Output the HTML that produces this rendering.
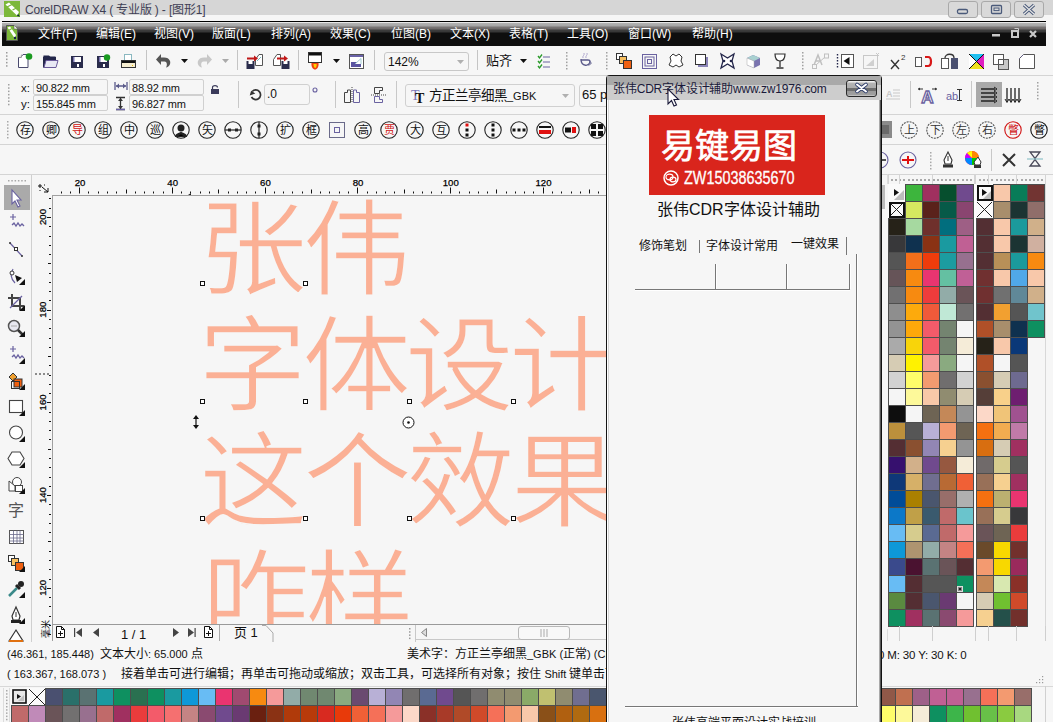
<!DOCTYPE html><html lang="zh-CN"><head><meta charset="utf-8"><style>
*{margin:0;padding:0;box-sizing:border-box}
html,body{width:1053px;height:722px;overflow:hidden;background:#f6f6f6;font-family:"Liberation Sans",sans-serif;position:relative}
.ab{position:absolute}
.t{position:absolute;white-space:nowrap;line-height:1}
svg{overflow:visible}
</style></head><body>
<div class="ab" style="left:0px;top:0px;width:1053px;height:15px;background:#d6d6d6"></div>
<div class="ab" style="left:0px;top:15px;width:1053px;height:6px;background:#f6f6f6"></div>
<svg class="ab" style="left:4px;top:1px" width="16" height="16" viewBox="0 0 16 16"><rect width="16" height="16" fill="#7cb83a"/><path d="M1.5 3.5 L5 1.5 L15 11 L13 14.5 Z" fill="#fff"/><path d="M3 6 L8 3.5 M8.5 9 L12.5 7" stroke="#7cb83a" stroke-width="1.3"/><path d="M14 13 L16 15.5 L13 15Z" fill="#124"/></svg>
<div class="t" style="left:25px;top:4px;font-size:12px;color:#3f3f55;letter-spacing:-0.16px">CorelDRAW X4 ( 专业版 ) - [图形1]</div>
<div class="ab" style="left:948px;top:1px;width:30px;height:17px;background:#d9d9d9;border:1px solid #a9a9a9;border-radius:3px"></div>
<div class="ab" style="left:981px;top:1px;width:30px;height:17px;background:#d9d9d9;border:1px solid #a9a9a9;border-radius:3px"></div>
<div class="ab" style="left:1014px;top:1px;width:30px;height:17px;background:#d9d9d9;border:1px solid #a9a9a9;border-radius:3px"></div>
<svg class="ab" style="left:948px;top:1px" width="30" height="17" viewBox="0 0 30 17"><rect x="9.5" y="8.5" width="10" height="4" rx="1.5" fill="none" stroke="#4a5a7a" stroke-width="1.3"/></svg>
<svg class="ab" style="left:981px;top:1px" width="30" height="17" viewBox="0 0 30 17"><rect x="10.5" y="4.5" width="10" height="8" rx="1" fill="none" stroke="#4a5a7a" stroke-width="1.3"/><rect x="13" y="7" width="5" height="2.6" fill="none" stroke="#4a5a7a" stroke-width="1"/></svg>
<svg class="ab" style="left:1014px;top:1px" width="30" height="17" viewBox="0 0 30 17"><path d="M10 4 L20 13 M20 4 L10 13" stroke="#4a5a7a" stroke-width="3.2"/><path d="M10 4 L20 13 M20 4 L10 13" stroke="#e6e6e6" stroke-width="1.2"/></svg>
<div class="ab" style="left:2px;top:21px;width:1044px;height:25px;background:linear-gradient(#000 0,#000 1px,#e8e8e8 1px,#e8e8e8 2px,#b4b4b4 2px,#a4a4a4 5px,#7a7676 6px,#6c6868 8px,#3e3e3e 9px,#363636 11px,#0e0e0e 12px,#0e0e0e 25px)"></div>
<svg class="ab" style="left:6px;top:25px" width="12" height="16" viewBox="0 0 12 16"><path d="M0.5 0.5 H8 L11.5 4 V15.5 H0.5 Z" fill="#7cb83a" stroke="#555"/><path d="M8 0.5 V4 H11.5" fill="#fff" stroke="#555" stroke-width=".6"/><path d="M1.5 2.5 L4 1.5 L10 10 L8.5 13 Z" fill="#fff"/><path d="M2.5 5.5 L6 3.5" stroke="#7cb83a" stroke-width="1.1"/><circle cx="9" cy="13" r="1.2" fill="#124"/></svg>
<div class="t" style="left:38px;top:28px;font-size:12px;color:#fff;">文件(F)</div>
<div class="t" style="left:96px;top:28px;font-size:12px;color:#fff;">编辑(E)</div>
<div class="t" style="left:154px;top:28px;font-size:12px;color:#fff;">视图(V)</div>
<div class="t" style="left:212px;top:28px;font-size:12px;color:#fff;">版面(L)</div>
<div class="t" style="left:271px;top:28px;font-size:12px;color:#fff;">排列(A)</div>
<div class="t" style="left:330px;top:28px;font-size:12px;color:#fff;">效果(C)</div>
<div class="t" style="left:391px;top:28px;font-size:12px;color:#fff;">位图(B)</div>
<div class="t" style="left:450px;top:28px;font-size:12px;color:#fff;">文本(X)</div>
<div class="t" style="left:509px;top:28px;font-size:12px;color:#fff;">表格(T)</div>
<div class="t" style="left:567px;top:28px;font-size:12px;color:#fff;">工具(O)</div>
<div class="t" style="left:628px;top:28px;font-size:12px;color:#fff;">窗口(W)</div>
<div class="t" style="left:692px;top:28px;font-size:12px;color:#fff;">帮助(H)</div>
<svg class="ab" style="left:990px;top:27px" width="50" height="14" viewBox="0 0 50 14"><rect x="2" y="7" width="8" height="2.5" fill="#c8c8c8"/><rect x="22" y="4" width="6" height="6" fill="none" stroke="#c8c8c8" stroke-width="2"/><path d="M24.5 1.5 H28.5 V6" fill="none" stroke="#c8c8c8" stroke-width="1"/><path d="M40 4 L46 10 M46 4 L40 10" stroke="#c8c8c8" stroke-width="2.2"/></svg>
<div class="ab" style="left:0px;top:75px;width:1053px;height:1px;background:#d4d4d4"></div>
<svg class="ab" style="left:6px;top:52px" width="2" height="18" viewBox="0 0 2 18"><rect x="0" y="0.0" width="1.5" height="1.5" fill="#9a9a9a"/><rect x="0" y="3.3" width="1.5" height="1.5" fill="#9a9a9a"/><rect x="0" y="6.6" width="1.5" height="1.5" fill="#9a9a9a"/><rect x="0" y="9.9" width="1.5" height="1.5" fill="#9a9a9a"/><rect x="0" y="13.2" width="1.5" height="1.5" fill="#9a9a9a"/></svg>
<svg class="ab" style="left:17px;top:53px" width="16" height="16" viewBox="0 0 16 16"><path d="M3.5 4.5 L6 1.5 H11 V14.5 H1.5 V4.5 Z" fill="#fff" stroke="#4a4a6e"/><path d="M1.5 4.5 H4.5 V1.5" fill="#ddd" stroke="#888" stroke-width=".6"/><circle cx="12" cy="3.5" r="3.3" fill="#1a9a20"/></svg>
<svg class="ab" style="left:43px;top:54px" width="16" height="14" viewBox="0 0 16 14"><path d="M0.5 1.5 H6 L7.5 3 H12.5 V6 H0.5 Z" fill="#23264a"/><path d="M0.5 13.5 V3 H12.5 V6" fill="#23264a" stroke="#23264a"/><path d="M1 13.5 L3 6.5 H15 L13 13.5 Z" fill="#e8e8f4" stroke="#6a5a9a"/></svg>
<svg class="ab" style="left:71px;top:56px" width="12" height="12" viewBox="0 0 12 12"><rect x="0" y="0" width="12" height="12" fill="#2a2c4c"/><rect x="2" y="1" width="8" height="5" fill="#fff"/><rect x="2" y="1" width="1.5" height="5" fill="#7a74b0"/><rect x="6" y="8" width="2" height="3" fill="#fff"/></svg>
<svg class="ab" style="left:97px;top:56px" width="12" height="12" viewBox="0 0 12 12"><rect x="0" y="0" width="12" height="12" fill="#2a2c4c"/><rect x="2" y="1" width="8" height="5" fill="#fff"/><rect x="2" y="1" width="1.5" height="5" fill="#7a74b0"/><rect x="6" y="8" width="2" height="3" fill="#fff"/><circle cx="10" cy="1.5" r="3.2" fill="#1a9a20"/></svg>
<svg class="ab" style="left:121px;top:54px" width="15" height="14" viewBox="0 0 15 14"><rect x="3.5" y="0.5" width="7" height="6" fill="#fff" stroke="#8ab8c0"/><rect x="0.5" y="6.5" width="14" height="7" fill="#f6eed0" stroke="#333"/><rect x="1" y="7" width="13" height="2" fill="#111"/><rect x="11" y="11" width="1" height="1" fill="#e6b800"/></svg>
<div class="ab" style="left:146px;top:50px;width:1px;height:20px;background:#c4c4c4"></div>
<svg class="ab" style="left:155px;top:53px" width="17" height="17" viewBox="0 0 17 17"><path d="M6 1 L1 6.5 L6 12 V8.5 H9.5 C12 8.5 12.5 12 11 14.5 C14 14 16 11 15 8 C14 5.5 12 4.5 9 4.5 H6 Z" fill="#555"/></svg>
<svg class="ab" style="left:181px;top:59px" width="8" height="5" viewBox="0 0 8 5"><path d="M0 0 H7 L3.5 4 Z" fill="#111"/></svg>
<svg class="ab" style="left:196px;top:53px" width="17" height="17" viewBox="0 0 17 17"><path d="M11 1 L16 6.5 L11 12 V8.5 H7.5 C5 8.5 4.5 12 6 14.5 C3 14 1 11 2 8 C3 5.5 5 4.5 8 4.5 H11 Z" fill="#c8c8c8"/></svg>
<svg class="ab" style="left:222px;top:59px" width="8" height="5" viewBox="0 0 8 5"><path d="M0 0 H7 L3.5 4 Z" fill="#aaa"/></svg>
<div class="ab" style="left:237px;top:50px;width:1px;height:20px;background:#c4c4c4"></div>
<svg class="ab" style="left:246px;top:53px" width="18" height="16" viewBox="0 0 18 16"><path d="M9.5 6.5 L13 1.5 H16.5 V12.5 H9.5 Z" fill="#fff" stroke="#555"/><path d="M11 8 L15 4" stroke="#7ab8c0"/><rect x="0.5" y="8" width="8" height="8" fill="#2a2c4c"/><rect x="2.5" y="8" width="4" height="3" fill="#fff"/><path d="M1 5.5 H9" stroke="#c01818" stroke-width="2"/><path d="M8 2.5 L12 5.5 L8 8.5 Z" fill="#c01818"/></svg>
<svg class="ab" style="left:273px;top:53px" width="17" height="16" viewBox="0 0 17 16"><path d="M0.5 6.5 L4 1.5 H7.5 V12.5 H0.5 Z" fill="#fff" stroke="#555"/><rect x="8.5" y="8" width="8" height="8" fill="#2a2c4c"/><rect x="10.5" y="8" width="4" height="3" fill="#fff"/><path d="M4 5.5 H12" stroke="#c01818" stroke-width="2"/><path d="M11 2.5 L15 5.5 L11 8.5 Z" fill="#c01818"/></svg>
<div class="ab" style="left:298px;top:50px;width:1px;height:20px;background:#c4c4c4"></div>
<svg class="ab" style="left:308px;top:52px" width="14" height="18" viewBox="0 0 14 18"><rect x="0.5" y="0.5" width="13" height="10" fill="#fff" stroke="#333"/><rect x="1" y="1" width="12" height="2.5" fill="#111"/><path d="M3.5 11 C3 15 5 17.5 7 17.5 C9 17.5 11 15 10.5 11 Z" fill="#f04010"/><path d="M5.5 12 C5.5 15 6.5 16 7.5 16 C8.5 15 9 13 8.5 12Z" fill="#ffd000"/></svg>
<svg class="ab" style="left:333px;top:59px" width="8" height="5" viewBox="0 0 8 5"><path d="M0 0 H7 L3.5 4 Z" fill="#111"/></svg>
<svg class="ab" style="left:349px;top:54px" width="15" height="15" viewBox="0 0 15 15"><rect x="0.5" y="0.5" width="14" height="14" fill="#fff" stroke="#555"/><rect x="1" y="1" width="13" height="2" fill="#6a62a8"/><rect x="2" y="8" width="10" height="5" fill="#5a54a0"/><path d="M6 10 L12 4.5 V10" fill="#fff" stroke="#8ac0c8" stroke-width=".8"/></svg>
<div class="ab" style="left:374px;top:50px;width:1px;height:20px;background:#c4c4c4"></div>
<div class="ab" style="left:384px;top:52px;width:85px;height:19px;background:#f6f6f6;border:1px solid #c8c8c8;border-radius:3px"></div>
<div class="t" style="left:388px;top:56px;font-size:12px;color:#111;">142%</div>
<svg class="ab" style="left:457px;top:60px" width="8" height="5" viewBox="0 0 8 5"><path d="M0 0 H7 L3.5 4 Z" fill="#b0b0b0"/></svg>
<div class="ab" style="left:477px;top:50px;width:1px;height:20px;background:#c4c4c4"></div>
<div class="t" style="left:486px;top:54px;font-size:13px;color:#111;">贴齐</div>
<svg class="ab" style="left:520px;top:59px" width="8" height="5" viewBox="0 0 8 5"><path d="M0 0 H7 L3.5 4 Z" fill="#111"/></svg>
<svg class="ab" style="left:537px;top:53px" width="14" height="16" viewBox="0 0 14 16"><path d="M1 3 L2.5 5 L5 1.5 M1 8 L2.5 10 L5 6.5 M1 13 L2.5 15 L5 11.5" fill="none" stroke="#2a9a2a" stroke-width="1.3"/><path d="M6 4 H13 M6 9 H13 M6 14 H13" stroke="#6a62a0" stroke-width="1.2"/></svg>
<svg class="ab" style="left:566px;top:52px" width="2" height="21" viewBox="0 0 2 21"><rect x="0" y="0.0" width="1.5" height="1.5" fill="#a0a0a0"/><rect x="0" y="3.2" width="1.5" height="1.5" fill="#a0a0a0"/><rect x="0" y="6.4" width="1.5" height="1.5" fill="#a0a0a0"/><rect x="0" y="9.6" width="1.5" height="1.5" fill="#a0a0a0"/><rect x="0" y="12.8" width="1.5" height="1.5" fill="#a0a0a0"/><rect x="0" y="16.0" width="1.5" height="1.5" fill="#a0a0a0"/></svg>
<svg class="ab" style="left:578px;top:53px" width="15" height="16" viewBox="0 0 15 16"><path d="M3 6 C3 14 12 14 12 8 C12 7 11 7 10 7 H3 Z" fill="none" stroke="#5a5a8a" stroke-width="1.3"/><path d="M11 9 C14 8 14 12 10 12" fill="none" stroke="#5a5a8a"/><path d="M5 5 C4 3 7 2 6 0 M8 5 C7 3 10 2 9 0" fill="none" stroke="#b0a8d0"/></svg>
<svg class="ab" style="left:606px;top:52px" width="2" height="21" viewBox="0 0 2 21"><rect x="0" y="0.0" width="1.5" height="1.5" fill="#a0a0a0"/><rect x="0" y="3.2" width="1.5" height="1.5" fill="#a0a0a0"/><rect x="0" y="6.4" width="1.5" height="1.5" fill="#a0a0a0"/><rect x="0" y="9.6" width="1.5" height="1.5" fill="#a0a0a0"/><rect x="0" y="12.8" width="1.5" height="1.5" fill="#a0a0a0"/><rect x="0" y="16.0" width="1.5" height="1.5" fill="#a0a0a0"/></svg>
<svg class="ab" style="left:616px;top:53px" width="17" height="17" viewBox="0 0 17 17"><rect x="0.5" y="0.5" width="6" height="6" fill="#fff" stroke="#333"/><rect x="3.5" y="3.5" width="7" height="7" fill="#f8c060" stroke="#333"/><rect x="7.5" y="7.5" width="8" height="8" fill="#f06010" stroke="#333"/></svg>
<svg class="ab" style="left:642px;top:54px" width="15" height="15" viewBox="0 0 15 15"><rect x="0.5" y="0.5" width="14" height="14" fill="none" stroke="#6a62a0"/><rect x="3" y="3" width="9" height="9" fill="none" stroke="#6a62a0"/><rect x="5.5" y="5.5" width="4" height="4" fill="none" stroke="#6a62a0"/></svg>
<svg class="ab" style="left:668px;top:53px" width="16" height="16" viewBox="0 0 16 16"><path d="M2 4 L5 1 L8 3 L11 1 L14 4 L13 8 L15 12 L11 14 L8 12 L5 14 L1 12 L3 8 Z" fill="#fff" stroke="#333"/></svg>
<svg class="ab" style="left:695px;top:54px" width="13" height="14" viewBox="0 0 13 14"><path d="M3 3 H13 V13 H3 Z" fill="#8a84b8"/><rect x="0.5" y="0.5" width="10" height="10" fill="#fff" stroke="#333"/></svg>
<svg class="ab" style="left:720px;top:53px" width="15" height="16" viewBox="0 0 15 16"><path d="M1 1 L7.5 5 L14 1 L12 8 L14 15 L7.5 11 L1 15 L3 8 Z" fill="#fff" stroke="#23264a" stroke-width="1.3"/><circle cx="4" cy="8" r="1.3" fill="#23264a"/><circle cx="11" cy="8" r="1.3" fill="#23264a"/></svg>
<svg class="ab" style="left:746px;top:54px" width="15" height="15" viewBox="0 0 15 15"><path d="M1 4 L7 1 L14 4 V11 L8 14 L1 11 Z" fill="#7a74b0"/><path d="M1 4 L7 1 L14 4 L8 7 Z" fill="#a8d0d0"/><path d="M1 4 L8 7 V14 L1 11 Z" fill="#fff" stroke="#aaa" stroke-width=".5"/></svg>
<svg class="ab" style="left:774px;top:53px" width="12" height="16" viewBox="0 0 12 16"><path d="M1 1 H11 C11 7 8 8 6 8 C4 8 1 7 1 1 Z" fill="#fff" stroke="#333" stroke-width="1.2"/><path d="M6 8 V14 M2.5 15 H9.5" stroke="#333" stroke-width="1.3"/></svg>
<svg class="ab" style="left:802px;top:52px" width="2" height="21" viewBox="0 0 2 21"><rect x="0" y="0.0" width="1.5" height="1.5" fill="#a0a0a0"/><rect x="0" y="3.2" width="1.5" height="1.5" fill="#a0a0a0"/><rect x="0" y="6.4" width="1.5" height="1.5" fill="#a0a0a0"/><rect x="0" y="9.6" width="1.5" height="1.5" fill="#a0a0a0"/><rect x="0" y="12.8" width="1.5" height="1.5" fill="#a0a0a0"/><rect x="0" y="16.0" width="1.5" height="1.5" fill="#a0a0a0"/></svg>
<svg class="ab" style="left:812px;top:53px" width="17" height="16" viewBox="0 0 17 16"><path d="M2 12 L6 2 L10 12 M3.5 8 H8.5" fill="none" stroke="#c0c0c0" stroke-width="1.5"/><rect x="12.5" y="1" width="4" height="4" fill="none" stroke="#c0c0c0"/><rect x="0.5" y="11.5" width="4" height="4" fill="none" stroke="#c0c0c0"/><path d="M4 12 L13 4" stroke="#c0c0c0"/></svg>
<svg class="ab" style="left:837px;top:54px" width="18" height="15" viewBox="0 0 18 15"><path d="M0.5 0 V15" stroke="#23264a" stroke-dasharray="1.5 1.5" stroke-width="1.4"/><rect x="4.5" y="0.5" width="12" height="13" fill="#fff" stroke="#555"/><path d="M6.5 7 L12.5 3 V11 Z" fill="#111"/></svg>
<svg class="ab" style="left:863px;top:53px" width="17" height="16" viewBox="0 0 17 16"><rect x="0.5" y="2.5" width="14" height="13" fill="none" stroke="#c8c8c8"/><path d="M3 13 L11 6 V13 Z" fill="#d0d0d0"/><path d="M13 0 L16 3 M16 0 L13 3" stroke="#c8c8c8"/></svg>
<svg class="ab" style="left:890px;top:54px" width="16" height="16" viewBox="0 0 16 16"><path d="M1 6 L9 15 M9 6 L1 15" stroke="#333" stroke-width="1.4"/><text x="11" y="6" font-size="8" font-family="Liberation Sans" fill="#333">2</text></svg>
<svg class="ab" style="left:915px;top:56px" width="17" height="11" viewBox="0 0 17 11"><rect x="0.5" y="1.5" width="6" height="9" fill="#fff" stroke="#555"/><path d="M10 1 H13 C17 1 17 10 13 10 H10" fill="none" stroke="#d81818" stroke-width="2.2"/></svg>
<svg class="ab" style="left:941px;top:53px" width="18" height="16" viewBox="0 0 18 16"><rect x="0.5" y="5.5" width="7" height="10" fill="#fff" stroke="#555"/><rect x="10" y="5" width="7" height="11" fill="#4a5070"/><path d="M4 5 C4 0 13 0 13 5" fill="none" stroke="#333" stroke-width="1.3"/></svg>
<svg class="ab" style="left:969px;top:54px" width="15" height="15" viewBox="0 0 15 15"><rect x="0" y="0" width="15" height="15" fill="#111"/><path d="M0 0 H15 L7.5 7.5 Z" fill="#20c0f0"/><path d="M15 0 V15 L7.5 7.5 Z" fill="#e020c0"/><path d="M0 15 H15 L7.5 7.5 Z" fill="#f0e020"/><path d="M0 0 V15 L7.5 7.5Z" fill="#fff"/><path d="M0 0 L15 15 M15 0 L0 15" stroke="#111"/></svg>
<svg class="ab" style="left:993px;top:54px" width="17" height="16" viewBox="0 0 17 16"><rect x="0.5" y="0.5" width="10" height="10" fill="#fff" stroke="#555"/><rect x="5.5" y="5.5" width="10" height="10" fill="#c8c8c8" stroke="#555"/><rect x="5.5" y="5.5" width="5" height="5" fill="#fff" stroke="#555"/></svg>
<svg class="ab" style="left:1019px;top:54px" width="17" height="15" viewBox="0 0 17 15"><path d="M0.5 4.5 L4.5 0.5 H15.5 V14.5 H0.5 Z" fill="#fff" stroke="#555"/><path d="M0.5 4.5 L4.5 0.5" stroke="#6a62a0" stroke-dasharray="1 1"/></svg>
<div class="ab" style="left:0px;top:114px;width:1053px;height:1px;background:#d4d4d4"></div>
<svg class="ab" style="left:8px;top:84px" width="2" height="25" viewBox="0 0 2 25"><rect x="0" y="0.0" width="1.5" height="1.5" fill="#a0a0a0"/><rect x="0" y="3.3" width="1.5" height="1.5" fill="#a0a0a0"/><rect x="0" y="6.6" width="1.5" height="1.5" fill="#a0a0a0"/><rect x="0" y="9.9" width="1.5" height="1.5" fill="#a0a0a0"/><rect x="0" y="13.2" width="1.5" height="1.5" fill="#a0a0a0"/><rect x="0" y="16.5" width="1.5" height="1.5" fill="#a0a0a0"/><rect x="0" y="19.8" width="1.5" height="1.5" fill="#a0a0a0"/></svg>
<div class="t" style="left:21px;top:83px;font-size:11.5px;color:#111;">x:</div>
<div class="t" style="left:21px;top:99px;font-size:11.5px;color:#111;">y:</div>
<div class="ab" style="left:33px;top:79px;width:75px;height:16px;background:#f6f6f6;border:1px solid #d0d0d0;border-radius:2px"></div>
<div class="ab" style="left:33px;top:95px;width:75px;height:16px;background:#f6f6f6;border:1px solid #d0d0d0;border-radius:2px"></div>
<div class="t" style="left:36px;top:83px;font-size:11px;color:#111;letter-spacing:-0.15px">90.822 mm</div>
<div class="t" style="left:36px;top:99px;font-size:11px;color:#111;letter-spacing:-0.15px">155.845 mm</div>
<svg class="ab" style="left:114px;top:82px" width="14" height="8" viewBox="0 0 14 8"><path d="M1 0 V8 M13 0 V8 M2 4 H12" stroke="#5a5a8a" stroke-width="1.3"/><path d="M2 4 L5 1.5 V6.5Z M12 4 L9 1.5 V6.5Z" fill="#5a5a8a"/></svg>
<svg class="ab" style="left:116px;top:97px" width="9" height="13" viewBox="0 0 9 13"><path d="M0 0.5 H9 M0 12.5 H9 M4.5 1 V12" stroke="#333" stroke-width="1.3"/><path d="M4.5 1 L2 4 H7Z M4.5 12 L2 9 H7Z" fill="#333"/><path d="M0 12.5 H9" stroke="#6a62a8" stroke-width="1.3"/></svg>
<div class="ab" style="left:129px;top:79px;width:75px;height:16px;background:#f6f6f6;border:1px solid #d0d0d0;border-radius:2px"></div>
<div class="ab" style="left:129px;top:95px;width:75px;height:16px;background:#f6f6f6;border:1px solid #d0d0d0;border-radius:2px"></div>
<div class="t" style="left:132px;top:83px;font-size:11px;color:#111;letter-spacing:-0.15px">88.92 mm</div>
<div class="t" style="left:132px;top:99px;font-size:11px;color:#111;letter-spacing:-0.15px">96.827 mm</div>
<svg class="ab" style="left:211px;top:85px" width="8" height="9" viewBox="0 0 8 9"><path d="M1.5 4 V2.5 C1.5 0 6.5 0 6.5 2.5" fill="none" stroke="#3a3a5a" stroke-width="1.2"/><rect x="0" y="4" width="8" height="5" fill="#3a3a5a"/></svg>
<div class="ab" style="left:238px;top:81px;width:1px;height:27px;background:#c8c8c8"></div>
<svg class="ab" style="left:249px;top:88px" width="13" height="13" viewBox="0 0 13 13"><path d="M3.2 3.5 A4.8 4.8 0 1 1 2.5 9" fill="none" stroke="#333" stroke-width="1.7"/><path d="M0 6.5 L6 6.5 L3 2.5Z" fill="#333" transform="rotate(-20 3 5)"/></svg>
<div class="ab" style="left:264px;top:84px;width:46px;height:21px;background:#f6f6f6;border:1px solid #d0d0d0;border-radius:3px"></div>
<div class="t" style="left:267px;top:88px;font-size:12px;color:#111;">.0</div>
<svg class="ab" style="left:312px;top:87px" width="6" height="6" viewBox="0 0 6 6"><circle cx="3" cy="3" r="2" fill="none" stroke="#6a62a0" stroke-width="1.1"/></svg>
<div class="ab" style="left:335px;top:81px;width:1px;height:27px;background:#c8c8c8"></div>
<svg class="ab" style="left:344px;top:87px" width="16" height="16" viewBox="0 0 16 16"><path d="M0.5 15.5 V5.5 H3.5 V3 H6.5 V15.5 Z" fill="none" stroke="#444"/><path d="M15.5 15.5 V5.5 H12.5 V3 H9.5 V15.5 Z" fill="none" stroke="#6a62a0"/><path d="M8 0 V16" stroke="#444" stroke-dasharray="1 1"/></svg>
<svg class="ab" style="left:371px;top:87px" width="16" height="16" viewBox="0 0 16 16"><path d="M3.5 0.5 H11.5 V3.5 H8.5 V6.5 H3.5 Z" fill="none" stroke="#444"/><path d="M3.5 15.5 H11.5 V12.5 H8.5 V9.5 H3.5 Z" fill="none" stroke="#6a62a0"/><path d="M0 8 H16" stroke="#444" stroke-dasharray="1 1"/></svg>
<div class="ab" style="left:396px;top:81px;width:1px;height:27px;background:#c8c8c8"></div>
<div class="ab" style="left:405px;top:84px;width:170px;height:23px;background:#f6f6f6;border:1px solid #d0d0d0;border-radius:3px"></div>
<svg class="ab" style="left:411px;top:89px" width="14" height="15" viewBox="0 0 14 15"><text x="0" y="11" font-size="14" font-family="Liberation Serif" fill="#7a74b8">T</text><text x="4" y="14" font-size="14" font-family="Liberation Serif" fill="#111" font-weight="bold">T</text></svg>
<div class="t" style="left:429px;top:89px;font-size:13.5px;color:#111;">方正兰亭细黑<span style="font-size:11px">_GBK</span></div>
<svg class="ab" style="left:562px;top:94px" width="8" height="5" viewBox="0 0 8 5"><path d="M0 0 H7 L3.5 4 Z" fill="#b0b0b0"/></svg>
<div class="ab" style="left:579px;top:84px;width:40px;height:23px;background:#f6f6f6;border:1px solid #d0d0d0;border-radius:3px"></div>
<div class="t" style="left:582px;top:88px;font-size:13px;color:#111;">65 pt</div>
<svg class="ab" style="left:886px;top:89px" width="14" height="12" viewBox="0 0 14 12"><text x="0" y="8" font-size="9" font-family="Liberation Sans" fill="#c8c8c8" font-weight="bold">A</text><path d="M7 1 H14 M7 4 H14 M7 7 H14 M0 10 H14" stroke="#c8c8c8"/></svg>
<div class="ab" style="left:910px;top:81px;width:1px;height:27px;background:#c8c8c8"></div>
<svg class="ab" style="left:918px;top:87px" width="19" height="17" viewBox="0 0 19 17"><text x="9.5" y="16" font-size="17" font-weight="bold" text-anchor="middle" font-family="Liberation Sans" fill="#fff" stroke="#6a62a0" stroke-width="1.3">A</text><path d="M0 2 H5 M14 2 H19" stroke="#333"/><path d="M0 2 L2 0.5 V3.5Z M19 2 L17 0.5 V3.5Z" fill="#333"/></svg>
<div class="t" style="left:946px;top:91px;font-size:11px;color:#6a62a0;">ab</div>
<svg class="ab" style="left:957px;top:89px" width="5" height="12" viewBox="0 0 5 12"><path d="M0 0.5 H5 M0 11.5 H5 M2.5 0.5 V11.5" stroke="#333"/></svg>
<div class="ab" style="left:971px;top:81px;width:1px;height:27px;background:#c8c8c8"></div>
<div class="ab" style="left:976px;top:82px;width:26px;height:25px;background:#a9a9a9"></div>
<svg class="ab" style="left:981px;top:88px" width="17" height="14" viewBox="0 0 17 14"><path d="M0 1 H14 M0 5 H14 M0 9 H14 M0 13 H14" stroke="#222" stroke-width="1.5"/><path d="M13 -1 L16 1 L13 3 M13 3 L16 5 L13 7 M13 7 L16 9 L13 11 M13 11 L16 13 L13 15" fill="none" stroke="#222"/></svg>
<svg class="ab" style="left:1006px;top:88px" width="16" height="15" viewBox="0 0 16 15"><path d="M1 0 V14 M5 0 V14 M9 0 V14 M13 0 V14" stroke="#222" stroke-width="1.3"/><path d="M-1 11 L1 14.5 L3 11 M3 11 L5 14.5 L7 11 M7 11 L9 14.5 L11 11 M11 11 L13 14.5 L15 11" fill="none" stroke="#222"/></svg>
<svg class="ab" style="left:1037px;top:82px" width="2" height="21" viewBox="0 0 2 21"><rect x="0" y="0.0" width="1.5" height="1.5" fill="#a0a0a0"/><rect x="0" y="3.2" width="1.5" height="1.5" fill="#a0a0a0"/><rect x="0" y="6.4" width="1.5" height="1.5" fill="#a0a0a0"/><rect x="0" y="9.6" width="1.5" height="1.5" fill="#a0a0a0"/><rect x="0" y="12.8" width="1.5" height="1.5" fill="#a0a0a0"/><rect x="0" y="16.0" width="1.5" height="1.5" fill="#a0a0a0"/></svg>
<div class="ab" style="left:0px;top:144px;width:1053px;height:1px;background:#d4d4d4"></div>
<div class="ab" style="left:0px;top:174px;width:1053px;height:1px;background:#d4d4d4"></div>
<svg class="ab" style="left:7px;top:121px" width="2" height="21" viewBox="0 0 2 21"><rect x="0" y="0.0" width="1.5" height="1.5" fill="#a8a8a8"/><rect x="0" y="3.2" width="1.5" height="1.5" fill="#a8a8a8"/><rect x="0" y="6.4" width="1.5" height="1.5" fill="#a8a8a8"/><rect x="0" y="9.6" width="1.5" height="1.5" fill="#a8a8a8"/><rect x="0" y="12.8" width="1.5" height="1.5" fill="#a8a8a8"/><rect x="0" y="16.0" width="1.5" height="1.5" fill="#a8a8a8"/></svg>
<svg class="ab" style="left:15px;top:120px" width="20" height="20" viewBox="0 0 20 20"><circle cx="10" cy="10" r="8.2" fill="none" stroke="#222" stroke-width="1.1"/><text x="10" y="14" font-size="11" text-anchor="middle" fill="#111">存</text></svg>
<svg class="ab" style="left:41px;top:120px" width="20" height="20" viewBox="0 0 20 20"><circle cx="10" cy="10" r="8.2" fill="none" stroke="#222" stroke-width="1.1"/><text x="10" y="14" font-size="11" text-anchor="middle" fill="#111">卿</text></svg>
<svg class="ab" style="left:67px;top:120px" width="20" height="20" viewBox="0 0 20 20"><circle cx="10" cy="10" r="8.2" fill="none" stroke="#222" stroke-width="1.1"/><text x="10" y="14" font-size="11" text-anchor="middle" fill="#d01010">导</text></svg>
<svg class="ab" style="left:93px;top:120px" width="20" height="20" viewBox="0 0 20 20"><circle cx="10" cy="10" r="8.2" fill="none" stroke="#222" stroke-width="1.1"/><text x="10" y="14" font-size="11" text-anchor="middle" fill="#111">组</text></svg>
<svg class="ab" style="left:119px;top:120px" width="20" height="20" viewBox="0 0 20 20"><circle cx="10" cy="10" r="8.2" fill="none" stroke="#222" stroke-width="1.1"/><text x="10" y="14" font-size="11" text-anchor="middle" fill="#111">中</text></svg>
<svg class="ab" style="left:145px;top:120px" width="20" height="20" viewBox="0 0 20 20"><circle cx="10" cy="10" r="8.2" fill="none" stroke="#222" stroke-width="1.1"/><text x="10" y="14" font-size="11" text-anchor="middle" fill="#111">巡</text></svg>
<svg class="ab" style="left:171px;top:120px" width="20" height="20" viewBox="0 0 20 20"><circle cx="10" cy="10" r="8.2" fill="none" stroke="#222" stroke-width="1.1"/><circle cx="10" cy="8" r="3.5" fill="#222"/><path d="M4 17 C4 11 16 11 16 17Z" fill="#222"/><path d="M6 16 L10 13 L14 16" stroke="#222" stroke-width="2"/></svg>
<svg class="ab" style="left:197px;top:120px" width="20" height="20" viewBox="0 0 20 20"><circle cx="10" cy="10" r="8.2" fill="none" stroke="#222" stroke-width="1.1"/><text x="10" y="14" font-size="11" text-anchor="middle" fill="#111">矢</text></svg>
<svg class="ab" style="left:223px;top:120px" width="20" height="20" viewBox="0 0 20 20"><circle cx="10" cy="10" r="8.2" fill="none" stroke="#222" stroke-width="1.1"/><path d="M2 10 H18" stroke="#222" stroke-width="1.2"/><rect x="5" y="8.5" width="3" height="3" fill="#222"/><rect x="12" y="8.5" width="3" height="3" fill="#222"/></svg>
<svg class="ab" style="left:249px;top:120px" width="20" height="20" viewBox="0 0 20 20"><circle cx="10" cy="10" r="8.2" fill="none" stroke="#222" stroke-width="1.1"/><path d="M10 2 V18" stroke="#222" stroke-width="1.2"/><rect x="8.5" y="4.5" width="3" height="3" fill="#222"/><rect x="8.5" y="12.5" width="3" height="3" fill="#222"/></svg>
<svg class="ab" style="left:275px;top:120px" width="20" height="20" viewBox="0 0 20 20"><circle cx="10" cy="10" r="8.2" fill="none" stroke="#222" stroke-width="1.1"/><text x="10" y="14" font-size="11" text-anchor="middle" fill="#111">扩</text></svg>
<svg class="ab" style="left:301px;top:120px" width="20" height="20" viewBox="0 0 20 20"><circle cx="10" cy="10" r="8.2" fill="none" stroke="#222" stroke-width="1.1"/><text x="10" y="14" font-size="11" text-anchor="middle" fill="#111">框</text></svg>
<svg class="ab" style="left:329px;top:122px" width="16" height="16" viewBox="0 0 16 16"><rect x="0.5" y="0.5" width="15" height="15" fill="none" stroke="#6a6a8a"/><rect x="5.5" y="5.5" width="5" height="5" fill="none" stroke="#6a62a0"/></svg>
<svg class="ab" style="left:353px;top:120px" width="20" height="20" viewBox="0 0 20 20"><circle cx="10" cy="10" r="8.2" fill="none" stroke="#222" stroke-width="1.1"/><text x="10" y="14" font-size="11" text-anchor="middle" fill="#111">高</text></svg>
<svg class="ab" style="left:379px;top:120px" width="20" height="20" viewBox="0 0 20 20"><circle cx="10" cy="10" r="8.2" fill="none" stroke="#222" stroke-width="1.1"/><text x="10" y="14" font-size="11" text-anchor="middle" fill="#d01010">贾</text></svg>
<svg class="ab" style="left:405px;top:120px" width="20" height="20" viewBox="0 0 20 20"><circle cx="10" cy="10" r="8.2" fill="none" stroke="#222" stroke-width="1.1"/><text x="10" y="14" font-size="11" text-anchor="middle" fill="#111">大</text></svg>
<svg class="ab" style="left:431px;top:120px" width="20" height="20" viewBox="0 0 20 20"><circle cx="10" cy="10" r="8.2" fill="none" stroke="#222" stroke-width="1.1"/><text x="10" y="14" font-size="11" text-anchor="middle" fill="#111">互</text></svg>
<svg class="ab" style="left:457px;top:120px" width="20" height="20" viewBox="0 0 20 20"><circle cx="10" cy="10" r="8.2" fill="none" stroke="#222" stroke-width="1.1"/><rect x="8.5" y="3.5" width="3" height="3" fill="#e01010"/><rect x="8.5" y="8.5" width="3" height="3" fill="#111"/><rect x="8.5" y="13.5" width="3" height="3" fill="#111"/></svg>
<svg class="ab" style="left:483px;top:120px" width="20" height="20" viewBox="0 0 20 20"><circle cx="10" cy="10" r="8.2" fill="none" stroke="#222" stroke-width="1.1"/><rect x="8.5" y="3.5" width="3" height="3" fill="#111"/><rect x="8.5" y="8.5" width="3" height="3" fill="#111"/><rect x="8.5" y="13.5" width="3" height="3" fill="#111"/></svg>
<svg class="ab" style="left:509px;top:120px" width="20" height="20" viewBox="0 0 20 20"><circle cx="10" cy="10" r="8.2" fill="none" stroke="#222" stroke-width="1.1"/><rect x="3.5" y="8.5" width="3" height="3" fill="#111"/><rect x="8.5" y="8.5" width="3" height="3" fill="#111"/><rect x="13.5" y="8.5" width="3" height="3" fill="#111"/></svg>
<svg class="ab" style="left:535px;top:120px" width="20" height="20" viewBox="0 0 20 20"><circle cx="10" cy="10" r="8.2" fill="none" stroke="#222" stroke-width="1.1"/><rect x="4" y="6" width="12" height="2" fill="#111"/><rect x="4" y="10" width="12" height="4" fill="#e01010"/></svg>
<svg class="ab" style="left:561px;top:120px" width="20" height="20" viewBox="0 0 20 20"><circle cx="10" cy="10" r="8.2" fill="none" stroke="#222" stroke-width="1.1"/><rect x="4" y="7.5" width="6" height="5" fill="#111"/><rect x="11" y="7" width="4" height="6" fill="#e01010"/></svg>
<svg class="ab" style="left:587px;top:120px" width="20" height="20" viewBox="0 0 20 20"><circle cx="10" cy="10" r="8.2" fill="none" stroke="#222" stroke-width="1.1"/><rect x="4" y="4" width="5" height="5" fill="#111"/><rect x="11" y="4" width="5" height="5" fill="#111"/><rect x="4" y="11" width="5" height="5" fill="#111"/><rect x="11" y="11" width="5" height="5" fill="#111"/></svg>
<svg class="ab" style="left:878px;top:121px" width="14" height="17" viewBox="0 0 14 17"><rect x="0" y="0" width="14" height="17" fill="#8a8a8a"/><rect x="3" y="4" width="8" height="9" fill="#6a6a6a"/></svg>
<svg class="ab" style="left:899px;top:120px" width="20" height="20" viewBox="0 0 20 20"><circle cx="10" cy="10" r="8.2" fill="none" stroke="#555" stroke-width="1.1" stroke-dasharray="2 1"/><text x="10" y="14" font-size="11" text-anchor="middle" fill="#333">上</text></svg>
<svg class="ab" style="left:925px;top:120px" width="20" height="20" viewBox="0 0 20 20"><circle cx="10" cy="10" r="8.2" fill="none" stroke="#555" stroke-width="1.1" stroke-dasharray="2 1"/><text x="10" y="14" font-size="11" text-anchor="middle" fill="#333">下</text></svg>
<svg class="ab" style="left:951px;top:120px" width="20" height="20" viewBox="0 0 20 20"><circle cx="10" cy="10" r="8.2" fill="none" stroke="#555" stroke-width="1.1" stroke-dasharray="2 1"/><text x="10" y="14" font-size="11" text-anchor="middle" fill="#333">左</text></svg>
<svg class="ab" style="left:977px;top:120px" width="20" height="20" viewBox="0 0 20 20"><circle cx="10" cy="10" r="8.2" fill="none" stroke="#555" stroke-width="1.1" stroke-dasharray="2 1"/><text x="10" y="14" font-size="11" text-anchor="middle" fill="#333">右</text></svg>
<svg class="ab" style="left:1003px;top:120px" width="20" height="20" viewBox="0 0 20 20"><circle cx="10" cy="10" r="8.2" fill="none" stroke="#d01010" stroke-width="1.1"/><text x="10" y="14" font-size="11" text-anchor="middle" fill="#d01010">瞥</text></svg>
<svg class="ab" style="left:1029px;top:120px" width="20" height="20" viewBox="0 0 20 20"><circle cx="10" cy="10" r="8.2" fill="none" stroke="#111" stroke-width="1.1"/><text x="10" y="14" font-size="11" text-anchor="middle" fill="#111">瞥</text></svg>
<svg class="ab" style="left:870px;top:150px" width="22" height="20" viewBox="0 0 22 20"><circle cx="10" cy="10" r="8" fill="none" stroke="#6a62a0" stroke-width="1.1"/><path d="M4 10 H16" stroke="#e01010" stroke-width="2"/><path d="M10 10 H16" stroke="#555" stroke-width="2"/></svg>
<svg class="ab" style="left:898px;top:150px" width="20" height="20" viewBox="0 0 20 20"><circle cx="10" cy="10" r="8" fill="none" stroke="#6a62a0" stroke-width="1.1"/><path d="M4 10 H16 M10 6 V14" stroke="#e01010" stroke-width="2"/></svg>
<svg class="ab" style="left:930px;top:152px" width="2" height="21" viewBox="0 0 2 21"><rect x="0" y="0.0" width="1.5" height="1.5" fill="#a8a8a8"/><rect x="0" y="3.2" width="1.5" height="1.5" fill="#a8a8a8"/><rect x="0" y="6.4" width="1.5" height="1.5" fill="#a8a8a8"/><rect x="0" y="9.6" width="1.5" height="1.5" fill="#a8a8a8"/><rect x="0" y="12.8" width="1.5" height="1.5" fill="#a8a8a8"/><rect x="0" y="16.0" width="1.5" height="1.5" fill="#a8a8a8"/></svg>
<svg class="ab" style="left:941px;top:151px" width="14" height="17" viewBox="0 0 14 17"><path d="M7 1 L11 9 L10 13 H4 L3 9 Z" fill="#fff" stroke="#333" stroke-width="1.1"/><path d="M7 5 V10" stroke="#333"/><rect x="2" y="13.5" width="10" height="3" fill="#333"/></svg>
<svg class="ab" style="left:964px;top:150px" width="22" height="19" viewBox="0 0 22 19"><circle cx="8" cy="8" r="7" fill="#f06"/><path d="M8 8 L8 1 A7 7 0 0 1 15 8Z" fill="#f80"/><path d="M8 8 L15 8 A7 7 0 0 1 8 15Z" fill="#0c0"/><path d="M8 8 L8 15 A7 7 0 0 1 1 8Z" fill="#08f"/><path d="M8 8 L1 8 A7 7 0 0 1 3 3Z" fill="#c0f"/><path d="M8 8 L3 3 A7 7 0 0 1 8 1Z" fill="#ff0"/><path d="M14 7 L17 12 L16 15 H11 L10 12 Z" fill="#fff" stroke="#333"/><rect x="10" y="15" width="7" height="3" fill="#333"/></svg>
<div class="ab" style="left:991px;top:149px;width:1px;height:22px;background:#c8c8c8"></div>
<svg class="ab" style="left:1002px;top:153px" width="14" height="14" viewBox="0 0 14 14"><path d="M1 1 L13 13 M13 1 L1 13" stroke="#333" stroke-width="2"/></svg>
<svg class="ab" style="left:1027px;top:151px" width="16" height="16" viewBox="0 0 16 16"><path d="M3 1 H13 L8 7.5 Z M3 15 H13 L8 8.5Z" fill="none" stroke="#4a4a5a" stroke-width="1.3"/><path d="M0 8 H16" stroke="#7ab8c0"/></svg>
<div class="ab" style="left:31px;top:175px;width:1px;height:467px;background:#cfcfcf"></div>
<svg class="ab" style="left:8px;top:180px" width="20" height="2" viewBox="0 0 20 2"><rect x="0.0" y="0" width="1.5" height="1.5" fill="#a8a8a8"/><rect x="3.3" y="0" width="1.5" height="1.5" fill="#a8a8a8"/><rect x="6.6" y="0" width="1.5" height="1.5" fill="#a8a8a8"/><rect x="9.9" y="0" width="1.5" height="1.5" fill="#a8a8a8"/><rect x="13.2" y="0" width="1.5" height="1.5" fill="#a8a8a8"/><rect x="16.5" y="0" width="1.5" height="1.5" fill="#a8a8a8"/></svg>
<div class="ab" style="left:4px;top:185px;width:26px;height:25px;background:#aaaaaa"></div>
<svg class="ab" style="left:6px;top:187px" width="22" height="22" viewBox="0 0 22 22"><path d="M6 3 L6 17 L9 14 L12 20 L14 19 L11 13 L15 13 Z" fill="#fff" stroke="#6a62a0" stroke-width="1.1"/></svg>
<svg class="ab" style="left:6px;top:213px" width="22" height="22" viewBox="0 0 22 22"><path d="M4 4 H10 M7 1 V7" stroke="#6a62a0" stroke-width="1.2"/><path d="M6 12 L8 10 L10 13 L12 10 L14 13 L16 11 L18 13" fill="none" stroke="#6a62a0" stroke-width="1.3"/></svg>
<svg class="ab" style="left:6px;top:239px" width="22" height="22" viewBox="0 0 22 22"><path d="M4 4 L16 17" stroke="#6a62a0" stroke-width="1.2"/><rect x="8.5" y="8.5" width="3" height="3" fill="#fff" stroke="#333"/><circle cx="4" cy="4" r="1" fill="#333"/><circle cx="16" cy="17" r="1" fill="#333"/></svg>
<svg class="ab" style="left:6px;top:266px" width="22" height="22" viewBox="0 0 22 22"><path d="M7 3 C4 8 5 13 9 17" fill="none" stroke="#6a62a0" stroke-width="1.2"/><circle cx="6" cy="7" r="2" fill="#fff" stroke="#333"/><path d="M9 9 L16 12 L11 16 Z" fill="#111"/><path d="M19 19 H13 L19 13Z" fill="#111"/></svg>
<svg class="ab" style="left:6px;top:292px" width="22" height="22" viewBox="0 0 22 22"><path d="M6 2 V14 H18 M2 6 H14 V18" fill="none" stroke="#444" stroke-width="2"/><path d="M4 16 L16 4" stroke="#6a62a0" stroke-width="1.2"/><path d="M19 19 H13 L19 13Z" fill="#111"/></svg>
<svg class="ab" style="left:6px;top:318px" width="22" height="22" viewBox="0 0 22 22"><circle cx="8" cy="8" r="5.5" fill="#e8e8f0" stroke="#555" stroke-width="1.5"/><path d="M5 8 H11" stroke="#aaa"/><path d="M12 12 L17 17" stroke="#333" stroke-width="2.5"/><path d="M19 19 H13 L19 13Z" fill="#111"/></svg>
<svg class="ab" style="left:6px;top:345px" width="22" height="22" viewBox="0 0 22 22"><path d="M4 4 H10 M7 1 V7" stroke="#6a62a0" stroke-width="1.2"/><path d="M6 12 L8 10 L10 13 L12 10 L14 13 L16 11 L18 13" fill="none" stroke="#6a62a0" stroke-width="1.3"/><path d="M19 19 H13 L19 13Z" fill="#111"/></svg>
<svg class="ab" style="left:6px;top:371px" width="22" height="22" viewBox="0 0 22 22"><path d="M3 6 L7 2 L11 6 L7 10Z" fill="#f0a030" stroke="#333"/><rect x="8" y="8" width="8" height="8" fill="#f06010" stroke="#333"/><rect x="5.5" y="10.5" width="8" height="7" fill="none" stroke="#333"/><path d="M19 19 H13 L19 13Z" fill="#111"/></svg>
<svg class="ab" style="left:6px;top:397px" width="22" height="22" viewBox="0 0 22 22"><rect x="3.5" y="3.5" width="13" height="12" fill="#fff" stroke="#444" stroke-width="1.1"/><path d="M19 19 H13 L19 13Z" fill="#111"/></svg>
<svg class="ab" style="left:6px;top:423px" width="22" height="22" viewBox="0 0 22 22"><circle cx="10" cy="9.5" r="6.5" fill="#fff" stroke="#444" stroke-width="1.1"/><path d="M19 19 H13 L19 13Z" fill="#111"/></svg>
<svg class="ab" style="left:6px;top:449px" width="22" height="22" viewBox="0 0 22 22"><path d="M6 3 H14 L18 9.5 L14 16 H6 L2 9.5 Z" fill="#fff" stroke="#444" stroke-width="1.1"/><path d="M19 19 H13 L19 13Z" fill="#111"/></svg>
<svg class="ab" style="left:6px;top:475px" width="22" height="22" viewBox="0 0 22 22"><circle cx="11" cy="7" r="4.5" fill="#fff" stroke="#444"/><path d="M3 6 L9 11 V16 H3Z" fill="#fff" stroke="#444"/><rect x="9.5" y="10.5" width="7" height="6" fill="#fff" stroke="#444"/><path d="M19 19 H13 L19 13Z" fill="#111"/></svg>
<svg class="ab" style="left:6px;top:500px" width="22" height="22" viewBox="0 0 22 22"><text x="10" y="16" font-size="16" text-anchor="middle" fill="#555">字</text></svg>
<svg class="ab" style="left:6px;top:527px" width="22" height="22" viewBox="0 0 22 22"><rect x="3.5" y="3.5" width="14" height="13" fill="#fff" stroke="#555"/><path d="M3.5 7.5 H17.5 M3.5 11 H17.5 M3.5 14 H17.5 M7.5 3.5 V16.5 M11 3.5 V16.5 M14 3.5 V16.5" stroke="#6a6a8a" stroke-width=".8"/></svg>
<svg class="ab" style="left:6px;top:553px" width="22" height="22" viewBox="0 0 22 22"><rect x="2.5" y="2.5" width="6" height="6" fill="#fff" stroke="#333"/><rect x="5.5" y="5.5" width="7" height="7" fill="#f8c060" stroke="#333"/><rect x="9.5" y="9.5" width="8" height="8" fill="#f06010" stroke="#333"/><path d="M19 19 H13 L19 13Z" fill="#111"/></svg>
<svg class="ab" style="left:6px;top:579px" width="22" height="22" viewBox="0 0 22 22"><path d="M3 17 L11 9" stroke="#3a8a8a" stroke-width="2.5"/><path d="M10 6 L14 10" stroke="#222" stroke-width="3"/><circle cx="15" cy="5" r="3" fill="#222"/><path d="M19 19 H13 L19 13Z" fill="#111"/></svg>
<svg class="ab" style="left:6px;top:605px" width="22" height="22" viewBox="0 0 22 22"><path d="M10 2 L14 11 L13 15 H7 L6 11 Z" fill="#fff" stroke="#333" stroke-width="1.2"/><path d="M10 7 V12" stroke="#333"/><rect x="5" y="15" width="10" height="3" fill="#222"/><path d="M19 19 H13 L19 13Z" fill="#111"/></svg>
<svg class="ab" style="left:6px;top:627px" width="22" height="22" viewBox="0 0 22 22"><path d="M3 14 L10 3 L17 14 Z" fill="#fff" stroke="#333" stroke-width="1.2"/><path d="M3 14 H17" stroke="#e07010" stroke-width="2"/></svg>
<svg class="ab" style="left:39px;top:184px" width="10" height="9" viewBox="0 0 10 9"><path d="M1 0 V4 M-1 2 H3" stroke="#111" stroke-width="1"/><path d="M3 3 L9 8" stroke="#111"/><path d="M9 8 L5 8 M9 8 L9 4" stroke="#111"/><path d="M5 1 H7 M1 6 V8" stroke="#111" stroke-dasharray="1 1"/></svg>
<svg class="ab" style="left:52px;top:175px" width="555" height="21" viewBox="0 0 555 21"><rect x="9" y="16.5" width="1" height="2" fill="#111"/><rect x="18" y="16.5" width="1" height="2" fill="#111"/><rect x="27" y="12.5" width="1" height="6" fill="#111"/><rect x="36" y="16.5" width="1" height="2" fill="#111"/><rect x="46" y="16.5" width="1" height="2" fill="#111"/><rect x="55" y="16.5" width="1" height="2" fill="#111"/><rect x="64" y="16.5" width="1" height="2" fill="#111"/><rect x="74" y="14.5" width="1" height="4" fill="#111"/><rect x="83" y="16.5" width="1" height="2" fill="#111"/><rect x="92" y="16.5" width="1" height="2" fill="#111"/><rect x="101" y="16.5" width="1" height="2" fill="#111"/><rect x="111" y="16.5" width="1" height="2" fill="#111"/><rect x="120" y="12.5" width="1" height="6" fill="#111"/><rect x="129" y="16.5" width="1" height="2" fill="#111"/><rect x="138" y="16.5" width="1" height="2" fill="#111"/><rect x="148" y="16.5" width="1" height="2" fill="#111"/><rect x="157" y="16.5" width="1" height="2" fill="#111"/><rect x="166" y="14.5" width="1" height="4" fill="#111"/><rect x="176" y="16.5" width="1" height="2" fill="#111"/><rect x="185" y="16.5" width="1" height="2" fill="#111"/><rect x="194" y="16.5" width="1" height="2" fill="#111"/><rect x="203" y="16.5" width="1" height="2" fill="#111"/><rect x="213" y="12.5" width="1" height="6" fill="#111"/><rect x="222" y="16.5" width="1" height="2" fill="#111"/><rect x="231" y="16.5" width="1" height="2" fill="#111"/><rect x="240" y="16.5" width="1" height="2" fill="#111"/><rect x="250" y="16.5" width="1" height="2" fill="#111"/><rect x="259" y="14.5" width="1" height="4" fill="#111"/><rect x="268" y="16.5" width="1" height="2" fill="#111"/><rect x="277" y="16.5" width="1" height="2" fill="#111"/><rect x="287" y="16.5" width="1" height="2" fill="#111"/><rect x="296" y="16.5" width="1" height="2" fill="#111"/><rect x="305" y="12.5" width="1" height="6" fill="#111"/><rect x="315" y="16.5" width="1" height="2" fill="#111"/><rect x="324" y="16.5" width="1" height="2" fill="#111"/><rect x="333" y="16.5" width="1" height="2" fill="#111"/><rect x="342" y="16.5" width="1" height="2" fill="#111"/><rect x="352" y="14.5" width="1" height="4" fill="#111"/><rect x="361" y="16.5" width="1" height="2" fill="#111"/><rect x="370" y="16.5" width="1" height="2" fill="#111"/><rect x="379" y="16.5" width="1" height="2" fill="#111"/><rect x="389" y="16.5" width="1" height="2" fill="#111"/><rect x="398" y="12.5" width="1" height="6" fill="#111"/><rect x="407" y="16.5" width="1" height="2" fill="#111"/><rect x="417" y="16.5" width="1" height="2" fill="#111"/><rect x="426" y="16.5" width="1" height="2" fill="#111"/><rect x="435" y="16.5" width="1" height="2" fill="#111"/><rect x="444" y="14.5" width="1" height="4" fill="#111"/><rect x="454" y="16.5" width="1" height="2" fill="#111"/><rect x="463" y="16.5" width="1" height="2" fill="#111"/><rect x="472" y="16.5" width="1" height="2" fill="#111"/><rect x="481" y="16.5" width="1" height="2" fill="#111"/><rect x="491" y="12.5" width="1" height="6" fill="#111"/><rect x="500" y="16.5" width="1" height="2" fill="#111"/><rect x="509" y="16.5" width="1" height="2" fill="#111"/><rect x="519" y="16.5" width="1" height="2" fill="#111"/><rect x="528" y="16.5" width="1" height="2" fill="#111"/><rect x="537" y="14.5" width="1" height="4" fill="#111"/><rect x="546" y="16.5" width="1" height="2" fill="#111"/><text x="28.0" y="10.8" font-size="9.6" text-anchor="middle" fill="#000" stroke="#000" stroke-width="0.25">20</text><text x="120.7" y="10.8" font-size="9.6" text-anchor="middle" fill="#000" stroke="#000" stroke-width="0.25">40</text><text x="213.4" y="10.8" font-size="9.6" text-anchor="middle" fill="#000" stroke="#000" stroke-width="0.25">60</text><text x="306.1" y="10.8" font-size="9.6" text-anchor="middle" fill="#000" stroke="#000" stroke-width="0.25">80</text><text x="398.8" y="10.8" font-size="9.6" text-anchor="middle" fill="#000" stroke="#000" stroke-width="0.25">100</text><text x="491.5" y="10.8" font-size="9.6" text-anchor="middle" fill="#000" stroke="#000" stroke-width="0.25">120</text><rect x="0" y="20" width="555" height="1" fill="#a0a0a0"/><path d="M136 20 L139 18 V20Z" fill="#222"/></svg>
<svg class="ab" style="left:32px;top:196px" width="21" height="446" viewBox="0 0 21 446"><rect x="17" y="2" width="2" height="1" fill="#111"/><rect x="17" y="12" width="2" height="1" fill="#111"/><rect x="15" y="21" width="4" height="1" fill="#111"/><rect x="17" y="30" width="2" height="1" fill="#111"/><rect x="17" y="40" width="2" height="1" fill="#111"/><rect x="17" y="49" width="2" height="1" fill="#111"/><rect x="17" y="58" width="2" height="1" fill="#111"/><rect x="16" y="67" width="3" height="1" fill="#111"/><rect x="17" y="77" width="2" height="1" fill="#111"/><rect x="17" y="86" width="2" height="1" fill="#111"/><rect x="17" y="95" width="2" height="1" fill="#111"/><rect x="17" y="104" width="2" height="1" fill="#111"/><rect x="15" y="114" width="4" height="1" fill="#111"/><rect x="17" y="123" width="2" height="1" fill="#111"/><rect x="17" y="132" width="2" height="1" fill="#111"/><rect x="17" y="142" width="2" height="1" fill="#111"/><rect x="17" y="151" width="2" height="1" fill="#111"/><rect x="16" y="160" width="3" height="1" fill="#111"/><rect x="17" y="169" width="2" height="1" fill="#111"/><rect x="17" y="179" width="2" height="1" fill="#111"/><rect x="17" y="188" width="2" height="1" fill="#111"/><rect x="17" y="197" width="2" height="1" fill="#111"/><rect x="15" y="206" width="4" height="1" fill="#111"/><rect x="17" y="216" width="2" height="1" fill="#111"/><rect x="17" y="225" width="2" height="1" fill="#111"/><rect x="17" y="234" width="2" height="1" fill="#111"/><rect x="17" y="243" width="2" height="1" fill="#111"/><rect x="16" y="253" width="3" height="1" fill="#111"/><rect x="17" y="262" width="2" height="1" fill="#111"/><rect x="17" y="271" width="2" height="1" fill="#111"/><rect x="17" y="281" width="2" height="1" fill="#111"/><rect x="17" y="290" width="2" height="1" fill="#111"/><rect x="15" y="299" width="4" height="1" fill="#111"/><rect x="17" y="308" width="2" height="1" fill="#111"/><rect x="17" y="318" width="2" height="1" fill="#111"/><rect x="17" y="327" width="2" height="1" fill="#111"/><rect x="17" y="336" width="2" height="1" fill="#111"/><rect x="16" y="345" width="3" height="1" fill="#111"/><rect x="17" y="355" width="2" height="1" fill="#111"/><rect x="17" y="364" width="2" height="1" fill="#111"/><rect x="17" y="373" width="2" height="1" fill="#111"/><rect x="17" y="383" width="2" height="1" fill="#111"/><rect x="15" y="392" width="4" height="1" fill="#111"/><rect x="17" y="401" width="2" height="1" fill="#111"/><rect x="17" y="410" width="2" height="1" fill="#111"/><rect x="17" y="420" width="2" height="1" fill="#111"/><rect x="17" y="429" width="2" height="1" fill="#111"/><rect x="16" y="438" width="3" height="1" fill="#111"/><text transform="translate(13.8,21.0) rotate(-90)" x="0" y="0" font-size="9.6" text-anchor="middle" fill="#000" stroke="#000" stroke-width="0.25">200</text><text transform="translate(13.8,113.7) rotate(-90)" x="0" y="0" font-size="9.6" text-anchor="middle" fill="#000" stroke="#000" stroke-width="0.25">180</text><text transform="translate(13.8,206.4) rotate(-90)" x="0" y="0" font-size="9.6" text-anchor="middle" fill="#000" stroke="#000" stroke-width="0.25">160</text><text transform="translate(13.8,299.1) rotate(-90)" x="0" y="0" font-size="9.6" text-anchor="middle" fill="#000" stroke="#000" stroke-width="0.25">140</text><text transform="translate(13.8,391.8) rotate(-90)" x="0" y="0" font-size="9.6" text-anchor="middle" fill="#000" stroke="#000" stroke-width="0.25">120</text><rect x="20" y="0" width="1" height="445" fill="#a0a0a0"/><path d="M3 178 H5 M7 178 H9 M11 178 H13 M15 178 H17" stroke="#222"/></svg>
<div class="t" style="left:37px;top:624px;font-size:9px;color:#111;"><span style="display:inline-block;transform:rotate(-90deg);font-size:9px">毫米</span></div>
<div class="ab" style="left:53px;top:197px;width:554px;height:428px;background:#f6f6f6;overflow:hidden">
<div class="t" style="left:148.0px;top:2px;width:104px;font-size:104px;color:#fbb095;-webkit-text-stroke:1.6px #f6f6f6;transform:scaleX(1.05);transform-origin:50% 0">张</div>
<div class="t" style="left:251.7px;top:2px;width:104px;font-size:104px;color:#fbb095;-webkit-text-stroke:1.6px #f6f6f6;transform:scaleX(1.05);transform-origin:50% 0">伟</div>
<div class="t" style="left:148.0px;top:118px;width:104px;font-size:104px;color:#fbb095;-webkit-text-stroke:1.6px #f6f6f6;transform:scaleX(1.05);transform-origin:50% 0">字</div>
<div class="t" style="left:251.7px;top:118px;width:104px;font-size:104px;color:#fbb095;-webkit-text-stroke:1.6px #f6f6f6;transform:scaleX(1.05);transform-origin:50% 0">体</div>
<div class="t" style="left:355.4px;top:118px;width:104px;font-size:104px;color:#fbb095;-webkit-text-stroke:1.6px #f6f6f6;transform:scaleX(1.05);transform-origin:50% 0">设</div>
<div class="t" style="left:459.1px;top:118px;width:104px;font-size:104px;color:#fbb095;-webkit-text-stroke:1.6px #f6f6f6;transform:scaleX(1.05);transform-origin:50% 0">计</div>
<div class="t" style="left:149.0px;top:234px;width:104px;font-size:104px;color:#fbb095;-webkit-text-stroke:1.6px #f6f6f6;transform:scaleX(1.05);transform-origin:50% 0">这</div>
<div class="t" style="left:252.7px;top:234px;width:104px;font-size:104px;color:#fbb095;-webkit-text-stroke:1.6px #f6f6f6;transform:scaleX(1.05);transform-origin:50% 0">个</div>
<div class="t" style="left:356.4px;top:234px;width:104px;font-size:104px;color:#fbb095;-webkit-text-stroke:1.6px #f6f6f6;transform:scaleX(1.05);transform-origin:50% 0">效</div>
<div class="t" style="left:460.1px;top:234px;width:104px;font-size:104px;color:#fbb095;-webkit-text-stroke:1.6px #f6f6f6;transform:scaleX(1.05);transform-origin:50% 0">果</div>
<div class="t" style="left:151.0px;top:352px;width:104px;font-size:104px;color:#fbb095;-webkit-text-stroke:1.6px #f6f6f6;transform:scaleX(1.05);transform-origin:50% 0">咋</div>
<div class="t" style="left:254.7px;top:352px;width:104px;font-size:104px;color:#fbb095;-webkit-text-stroke:1.6px #f6f6f6;transform:scaleX(1.05);transform-origin:50% 0">样</div>
</div>
<div class="ab" style="left:200px;top:281px;width:5px;height:5px;background:#fff;border:1px solid #111"></div>
<div class="ab" style="left:303px;top:281px;width:5px;height:5px;background:#fff;border:1px solid #111"></div>
<div class="ab" style="left:200px;top:399px;width:5px;height:5px;background:#fff;border:1px solid #111"></div>
<div class="ab" style="left:303px;top:399px;width:5px;height:5px;background:#fff;border:1px solid #111"></div>
<div class="ab" style="left:407px;top:399px;width:5px;height:5px;background:#fff;border:1px solid #111"></div>
<div class="ab" style="left:511px;top:399px;width:5px;height:5px;background:#fff;border:1px solid #111"></div>
<div class="ab" style="left:200px;top:516px;width:5px;height:5px;background:#fff;border:1px solid #111"></div>
<div class="ab" style="left:303px;top:516px;width:5px;height:5px;background:#fff;border:1px solid #111"></div>
<div class="ab" style="left:407px;top:516px;width:5px;height:5px;background:#fff;border:1px solid #111"></div>
<div class="ab" style="left:511px;top:516px;width:5px;height:5px;background:#fff;border:1px solid #111"></div>
<svg class="ab" style="left:192px;top:415px" width="8" height="14" viewBox="0 0 8 14"><path d="M4 0 L7 4 H1Z M4 14 L7 10 H1Z" fill="#111"/><path d="M4 3 V11" stroke="#111" stroke-width="1.2"/></svg>
<svg class="ab" style="left:402px;top:416px" width="13" height="13" viewBox="0 0 13 13"><circle cx="6.5" cy="6.5" r="5.5" fill="#fff" stroke="#111"/><circle cx="6.5" cy="6.5" r="1.3" fill="#111"/></svg>
<div class="ab" style="left:52px;top:624px;width:555px;height:1px;background:#9a9a9a"></div>
<div class="ab" style="left:53px;top:625px;width:554px;height:17px;background:#f6f6f6"></div>
<svg class="ab" style="left:56px;top:626px" width="10" height="12" viewBox="0 0 10 12"><path d="M0.5 0.5 H5.5 L8.5 3.5 V11.5 H0.5 Z" fill="#fff" stroke="#111"/><path d="M5.5 0.5 V3.5 H8.5" fill="none" stroke="#111"/><path d="M2 7.5 H7 M4.5 5 V10" stroke="#111"/></svg>
<svg class="ab" style="left:74px;top:628px" width="8" height="9" viewBox="0 0 8 9"><rect x="0" y="0" width="1.2" height="9" fill="#444"/><path d="M8 0 V9 L2 4.5Z" fill="#444"/></svg>
<svg class="ab" style="left:93px;top:628px" width="6" height="9" viewBox="0 0 6 9"><path d="M6 0 V9 L0 4.5Z" fill="#444"/></svg>
<div class="t" style="left:121px;top:628px;font-size:13px;color:#111;">1 / 1</div>
<svg class="ab" style="left:173px;top:628px" width="6" height="9" viewBox="0 0 6 9"><path d="M0 0 V9 L6 4.5Z" fill="#444"/></svg>
<svg class="ab" style="left:188px;top:628px" width="8" height="9" viewBox="0 0 8 9"><path d="M0 0 V9 L6 4.5Z" fill="#444"/><rect x="6.5" y="0" width="1.2" height="9" fill="#444"/></svg>
<svg class="ab" style="left:204px;top:626px" width="10" height="12" viewBox="0 0 10 12"><path d="M0.5 0.5 H5.5 L8.5 3.5 V11.5 H0.5 Z" fill="#fff" stroke="#111"/><path d="M5.5 0.5 V3.5 H8.5" fill="none" stroke="#111"/><path d="M2 7.5 H7 M4.5 5 V10" stroke="#111"/></svg>
<div class="ab" style="left:219px;top:625px;width:1px;height:16px;background:#aaa"></div>
<div class="t" style="left:234px;top:626px;font-size:13px;color:#111;">页 1</div>
<svg class="ab" style="left:262px;top:625px" width="12" height="17" viewBox="0 0 12 17"><path d="M0 0.5 H4 L11 8 V17" fill="none" stroke="#aaa"/></svg>
<svg class="ab" style="left:409px;top:628px" width="2" height="14" viewBox="0 0 2 14"><rect x="0" y="0.0" width="1.5" height="1.5" fill="#999"/><rect x="0" y="3.2" width="1.5" height="1.5" fill="#999"/><rect x="0" y="6.4" width="1.5" height="1.5" fill="#999"/><rect x="0" y="9.6" width="1.5" height="1.5" fill="#999"/></svg>
<div class="ab" style="left:415px;top:625px;width:192px;height:17px;background:#f6f6f6;border-left:1px solid #c8c8c8"></div>
<svg class="ab" style="left:421px;top:628px" width="6" height="9" viewBox="0 0 6 9"><path d="M5.5 0.5 V8.5 L0.5 4.5Z" fill="#ddd" stroke="#888"/></svg>
<div class="ab" style="left:415px;top:639px;width:192px;height:1px;background:#c8c8c8"></div>
<div class="ab" style="left:518px;top:626px;width:52px;height:14px;background:#f8f8f8;border:1px solid #b8b8b8;border-radius:3px"></div>
<svg class="ab" style="left:540px;top:629px" width="8" height="8" viewBox="0 0 8 8"><path d="M1 0 V8 M4 0 V8 M7 0 V8" stroke="#aaa"/></svg>
<div class="t" style="left:7px;top:648px;color:#111;font-size:11px;line-height:13px"><span style="font-size:11px">(46.361, 185.448)&nbsp; </span><span style="font-size:12px">文本大小</span><span style="font-size:11px">: 65.000 </span><span style="font-size:12px">点</span></div>
<div class="t" style="left:407px;top:648px;color:#111;font-size:11px;line-height:13px"><span style="font-size:12px">美术字：方正兰亭细黑</span><span style="font-size:11px">_GBK (</span><span style="font-size:12px">正常</span><span style="font-size:11px">) (CHC)</span></div>
<div class="t" style="left:7px;top:668px;color:#111;font-size:11px;line-height:13px"><span style="font-size:11px">( 163.367, 168.073 )&nbsp;&nbsp;&nbsp;&nbsp;&nbsp;</span><span style="font-size:12px">接着单击可进行编辑；再单击可拖动或缩放；双击工具，可选择所有对象；按住</span><span style="font-size:11px"> Shift </span><span style="font-size:12px">键单击可选择多个对象</span></div>
<div class="ab" style="left:0px;top:686px;width:1053px;height:1px;background:#d0d0d0"></div>
<div class="ab" style="left:883px;top:175px;width:3px;height:450px;background:#f6f6f6"></div>
<div class="ab" style="left:882px;top:185px;width:3px;height:24px;background:#bcbcbc"></div>
<div class="ab" style="left:887px;top:174px;width:1px;height:467px;background:#dcdcdc"></div>
<div class="ab" style="left:1045px;top:174px;width:1px;height:467px;background:#d8d8d8"></div>
<div class="ab" style="left:888px;top:174px;width:87px;height:11px;background:#f6f6f6;border:1px solid #d4d4d4;border-bottom:none"></div>
<div class="ab" style="left:975px;top:174px;width:71px;height:11px;background:#f6f6f6;border:1px solid #d4d4d4;border-bottom:none"></div>
<svg class="ab" style="left:891px;top:179px" width="84" height="3" viewBox="0 0 84 3"><rect x="0" y="0" width="2" height="2" fill="#aaa"/><rect x="4" y="0" width="2" height="2" fill="#aaa"/><rect x="8" y="0" width="2" height="2" fill="#aaa"/><rect x="12" y="0" width="2" height="2" fill="#aaa"/><rect x="17" y="0" width="2" height="2" fill="#aaa"/><rect x="21" y="0" width="2" height="2" fill="#aaa"/><rect x="25" y="0" width="2" height="2" fill="#aaa"/><rect x="29" y="0" width="2" height="2" fill="#aaa"/><rect x="33" y="0" width="2" height="2" fill="#aaa"/><rect x="37" y="0" width="2" height="2" fill="#aaa"/><rect x="42" y="0" width="2" height="2" fill="#aaa"/><rect x="46" y="0" width="2" height="2" fill="#aaa"/><rect x="50" y="0" width="2" height="2" fill="#aaa"/><rect x="54" y="0" width="2" height="2" fill="#aaa"/><rect x="58" y="0" width="2" height="2" fill="#aaa"/><rect x="62" y="0" width="2" height="2" fill="#aaa"/><rect x="66" y="0" width="2" height="2" fill="#aaa"/><rect x="71" y="0" width="2" height="2" fill="#aaa"/><rect x="75" y="0" width="2" height="2" fill="#aaa"/><rect x="79" y="0" width="2" height="2" fill="#aaa"/></svg>
<svg class="ab" style="left:979px;top:179px" width="66" height="3" viewBox="0 0 66 3"><rect x="0" y="0" width="2" height="2" fill="#aaa"/><rect x="4" y="0" width="2" height="2" fill="#aaa"/><rect x="8" y="0" width="2" height="2" fill="#aaa"/><rect x="12" y="0" width="2" height="2" fill="#aaa"/><rect x="17" y="0" width="2" height="2" fill="#aaa"/><rect x="21" y="0" width="2" height="2" fill="#aaa"/><rect x="25" y="0" width="2" height="2" fill="#aaa"/><rect x="29" y="0" width="2" height="2" fill="#aaa"/><rect x="33" y="0" width="2" height="2" fill="#aaa"/><rect x="37" y="0" width="2" height="2" fill="#aaa"/><rect x="42" y="0" width="2" height="2" fill="#aaa"/><rect x="46" y="0" width="2" height="2" fill="#aaa"/><rect x="50" y="0" width="2" height="2" fill="#aaa"/><rect x="54" y="0" width="2" height="2" fill="#aaa"/><rect x="58" y="0" width="2" height="2" fill="#aaa"/><rect x="62" y="0" width="2" height="2" fill="#aaa"/></svg>
<div class="ab" style="left:899px;top:175px;width:1px;height:9px;background:#d4d4d4"></div>
<div class="ab" style="left:932px;top:175px;width:1px;height:9px;background:#d4d4d4"></div>
<div class="ab" style="left:988px;top:175px;width:1px;height:9px;background:#d4d4d4"></div>
<div class="ab" style="left:1016px;top:175px;width:1px;height:9px;background:#d4d4d4"></div>
<div class="ab" style="left:886px;top:184px;width:2px;height:445px;background:#f6f6f6"></div>
<svg class="ab" style="left:888px;top:184px" width="86" height="443" viewBox="0 0 86 443"><rect x="0" y="0" width="17" height="17" fill="#fafafa"/><path d="M6 16 L16 6 V16Z" fill="#bdbdbd"/><path d="M6 5 L11 8.5 L6 12Z" fill="#111"/><rect x="17" y="0" width="18" height="18" fill="#4e4e4e"/><rect x="18" y="1" width="16" height="16" fill="#3db53d"/><rect x="34" y="0" width="18" height="18" fill="#4e4e4e"/><rect x="35" y="1" width="16" height="16" fill="#a0305f"/><rect x="51" y="0" width="18" height="18" fill="#4e4e4e"/><rect x="52" y="1" width="16" height="16" fill="#064f2e"/><rect x="68" y="0" width="18" height="18" fill="#4e4e4e"/><rect x="69" y="1" width="16" height="16" fill="#704a8e"/><rect x="0" y="17" width="17" height="17" fill="#fafafa"/><path d="M1 18 L16 33 M16 18 L1 33" stroke="#222" stroke-width="1"/><rect x="17" y="17" width="18" height="18" fill="#4e4e4e"/><rect x="18" y="18" width="16" height="16" fill="#d5e860"/><rect x="34" y="17" width="18" height="18" fill="#4e4e4e"/><rect x="35" y="18" width="16" height="16" fill="#5a221b"/><rect x="51" y="17" width="18" height="18" fill="#4e4e4e"/><rect x="52" y="18" width="16" height="16" fill="#075a48"/><rect x="68" y="17" width="18" height="18" fill="#4e4e4e"/><rect x="69" y="18" width="16" height="16" fill="#8a4570"/><rect x="0" y="34" width="18" height="18" fill="#4e4e4e"/><rect x="1" y="35" width="16" height="16" fill="#262218"/><rect x="17" y="34" width="18" height="18" fill="#4e4e4e"/><rect x="18" y="35" width="16" height="16" fill="#a6d9a0"/><rect x="34" y="34" width="18" height="18" fill="#4e4e4e"/><rect x="35" y="35" width="16" height="16" fill="#6f302c"/><rect x="51" y="34" width="18" height="18" fill="#4e4e4e"/><rect x="52" y="35" width="16" height="16" fill="#016e7e"/><rect x="68" y="34" width="18" height="18" fill="#4e4e4e"/><rect x="69" y="35" width="16" height="16" fill="#9e5f85"/><rect x="0" y="51" width="18" height="18" fill="#4e4e4e"/><rect x="1" y="52" width="16" height="16" fill="#38383a"/><rect x="17" y="51" width="18" height="18" fill="#4e4e4e"/><rect x="18" y="52" width="16" height="16" fill="#0f314f"/><rect x="34" y="51" width="18" height="18" fill="#4e4e4e"/><rect x="35" y="52" width="16" height="16" fill="#8a3214"/><rect x="51" y="51" width="18" height="18" fill="#4e4e4e"/><rect x="52" y="52" width="16" height="16" fill="#1a9aa0"/><rect x="68" y="51" width="18" height="18" fill="#4e4e4e"/><rect x="69" y="52" width="16" height="16" fill="#c06094"/><rect x="0" y="68" width="18" height="18" fill="#4e4e4e"/><rect x="1" y="69" width="16" height="16" fill="#555555"/><rect x="17" y="68" width="18" height="18" fill="#4e4e4e"/><rect x="18" y="69" width="16" height="16" fill="#f36f1a"/><rect x="34" y="68" width="18" height="18" fill="#4e4e4e"/><rect x="35" y="69" width="16" height="16" fill="#ef3c0c"/><rect x="51" y="68" width="18" height="18" fill="#4e4e4e"/><rect x="52" y="69" width="16" height="16" fill="#1c9ca0"/><rect x="68" y="68" width="18" height="18" fill="#4e4e4e"/><rect x="69" y="69" width="16" height="16" fill="#97708f"/><rect x="0" y="85" width="18" height="18" fill="#4e4e4e"/><rect x="1" y="86" width="16" height="16" fill="#665458"/><rect x="17" y="85" width="18" height="18" fill="#4e4e4e"/><rect x="18" y="86" width="16" height="16" fill="#f78a10"/><rect x="34" y="85" width="18" height="18" fill="#4e4e4e"/><rect x="35" y="86" width="16" height="16" fill="#e93570"/><rect x="51" y="85" width="18" height="18" fill="#4e4e4e"/><rect x="52" y="86" width="16" height="16" fill="#64c0a2"/><rect x="68" y="85" width="18" height="18" fill="#4e4e4e"/><rect x="69" y="86" width="16" height="16" fill="#c06096"/><rect x="0" y="102" width="18" height="18" fill="#4e4e4e"/><rect x="1" y="103" width="16" height="16" fill="#717071"/><rect x="17" y="102" width="18" height="18" fill="#4e4e4e"/><rect x="18" y="103" width="16" height="16" fill="#f78a10"/><rect x="34" y="102" width="18" height="18" fill="#4e4e4e"/><rect x="35" y="103" width="16" height="16" fill="#ee3c3c"/><rect x="51" y="102" width="18" height="18" fill="#4e4e4e"/><rect x="52" y="103" width="16" height="16" fill="#92aca8"/><rect x="68" y="102" width="18" height="18" fill="#4e4e4e"/><rect x="69" y="103" width="16" height="16" fill="#6a5458"/><rect x="0" y="119" width="18" height="18" fill="#4e4e4e"/><rect x="1" y="120" width="16" height="16" fill="#8e8e8e"/><rect x="17" y="119" width="18" height="18" fill="#4e4e4e"/><rect x="18" y="120" width="16" height="16" fill="#fdaa0c"/><rect x="34" y="119" width="18" height="18" fill="#4e4e4e"/><rect x="35" y="120" width="16" height="16" fill="#f05a3a"/><rect x="51" y="119" width="18" height="18" fill="#4e4e4e"/><rect x="52" y="120" width="16" height="16" fill="#c0e8d6"/><rect x="68" y="119" width="18" height="18" fill="#4e4e4e"/><rect x="69" y="120" width="16" height="16" fill="#727070"/><rect x="0" y="136" width="18" height="18" fill="#4e4e4e"/><rect x="1" y="137" width="16" height="16" fill="#939393"/><rect x="17" y="136" width="18" height="18" fill="#4e4e4e"/><rect x="18" y="137" width="16" height="16" fill="#fda80a"/><rect x="34" y="136" width="18" height="18" fill="#4e4e4e"/><rect x="35" y="137" width="16" height="16" fill="#f35b6a"/><rect x="51" y="136" width="18" height="18" fill="#4e4e4e"/><rect x="52" y="137" width="16" height="16" fill="#748470"/><rect x="68" y="136" width="18" height="18" fill="#4e4e4e"/><rect x="69" y="137" width="16" height="16" fill="#f5f5f5"/><rect x="0" y="153" width="18" height="18" fill="#4e4e4e"/><rect x="1" y="154" width="16" height="16" fill="#aaaaaa"/><rect x="17" y="153" width="18" height="18" fill="#4e4e4e"/><rect x="18" y="154" width="16" height="16" fill="#f8d40a"/><rect x="34" y="153" width="18" height="18" fill="#4e4e4e"/><rect x="35" y="154" width="16" height="16" fill="#f35b6a"/><rect x="51" y="153" width="18" height="18" fill="#4e4e4e"/><rect x="52" y="154" width="16" height="16" fill="#748470"/><rect x="68" y="153" width="18" height="18" fill="#4e4e4e"/><rect x="69" y="154" width="16" height="16" fill="#f5ecd8"/><rect x="0" y="170" width="18" height="18" fill="#4e4e4e"/><rect x="1" y="171" width="16" height="16" fill="#d6ccb4"/><rect x="17" y="170" width="18" height="18" fill="#4e4e4e"/><rect x="18" y="171" width="16" height="16" fill="#fff200"/><rect x="34" y="170" width="18" height="18" fill="#4e4e4e"/><rect x="35" y="171" width="16" height="16" fill="#f59b9a"/><rect x="51" y="170" width="18" height="18" fill="#4e4e4e"/><rect x="52" y="171" width="16" height="16" fill="#8aaa80"/><rect x="68" y="170" width="18" height="18" fill="#4e4e4e"/><rect x="69" y="171" width="16" height="16" fill="#f5f5f5"/><rect x="0" y="187" width="18" height="18" fill="#4e4e4e"/><rect x="1" y="188" width="16" height="16" fill="#d2d2d2"/><rect x="17" y="187" width="18" height="18" fill="#4e4e4e"/><rect x="18" y="188" width="16" height="16" fill="#fefd6a"/><rect x="34" y="187" width="18" height="18" fill="#4e4e4e"/><rect x="35" y="188" width="16" height="16" fill="#f39b70"/><rect x="51" y="187" width="18" height="18" fill="#4e4e4e"/><rect x="52" y="188" width="16" height="16" fill="#706e6e"/><rect x="68" y="187" width="18" height="18" fill="#4e4e4e"/><rect x="69" y="188" width="16" height="16" fill="#d2d2d2"/><rect x="0" y="204" width="18" height="18" fill="#4e4e4e"/><rect x="1" y="205" width="16" height="16" fill="#f5f5f5"/><rect x="17" y="204" width="18" height="18" fill="#4e4e4e"/><rect x="18" y="205" width="16" height="16" fill="#fdf99a"/><rect x="34" y="204" width="18" height="18" fill="#4e4e4e"/><rect x="35" y="205" width="16" height="16" fill="#f8c8a8"/><rect x="51" y="204" width="18" height="18" fill="#4e4e4e"/><rect x="52" y="205" width="16" height="16" fill="#908c70"/><rect x="68" y="204" width="18" height="18" fill="#4e4e4e"/><rect x="69" y="205" width="16" height="16" fill="#d6ccb4"/><rect x="0" y="221" width="18" height="18" fill="#4e4e4e"/><rect x="1" y="222" width="16" height="16" fill="#0e0e0e"/><rect x="17" y="221" width="18" height="18" fill="#4e4e4e"/><rect x="18" y="222" width="16" height="16" fill="#f5f5f5"/><rect x="34" y="221" width="18" height="18" fill="#4e4e4e"/><rect x="35" y="222" width="16" height="16" fill="#6e6454"/><rect x="51" y="221" width="18" height="18" fill="#4e4e4e"/><rect x="52" y="222" width="16" height="16" fill="#c48858"/><rect x="68" y="221" width="18" height="18" fill="#4e4e4e"/><rect x="69" y="222" width="16" height="16" fill="#949494"/><rect x="0" y="238" width="18" height="18" fill="#4e4e4e"/><rect x="1" y="239" width="16" height="16" fill="#bc903c"/><rect x="17" y="238" width="18" height="18" fill="#4e4e4e"/><rect x="18" y="239" width="16" height="16" fill="#565656"/><rect x="34" y="238" width="18" height="18" fill="#4e4e4e"/><rect x="35" y="239" width="16" height="16" fill="#b8b0d6"/><rect x="51" y="238" width="18" height="18" fill="#4e4e4e"/><rect x="52" y="239" width="16" height="16" fill="#f39a70"/><rect x="68" y="238" width="18" height="18" fill="#4e4e4e"/><rect x="69" y="239" width="16" height="16" fill="#6e6454"/><rect x="0" y="255" width="18" height="18" fill="#4e4e4e"/><rect x="1" y="256" width="16" height="16" fill="#542e33"/><rect x="17" y="255" width="18" height="18" fill="#4e4e4e"/><rect x="18" y="256" width="16" height="16" fill="#8a5030"/><rect x="34" y="255" width="18" height="18" fill="#4e4e4e"/><rect x="35" y="256" width="16" height="16" fill="#9286b4"/><rect x="51" y="255" width="18" height="18" fill="#4e4e4e"/><rect x="52" y="256" width="16" height="16" fill="#f6d090"/><rect x="68" y="255" width="18" height="18" fill="#4e4e4e"/><rect x="69" y="256" width="16" height="16" fill="#949494"/><rect x="0" y="272" width="18" height="18" fill="#4e4e4e"/><rect x="1" y="273" width="16" height="16" fill="#36106e"/><rect x="17" y="272" width="18" height="18" fill="#4e4e4e"/><rect x="18" y="273" width="16" height="16" fill="#d2b08a"/><rect x="34" y="272" width="18" height="18" fill="#4e4e4e"/><rect x="35" y="273" width="16" height="16" fill="#704a8e"/><rect x="51" y="272" width="18" height="18" fill="#4e4e4e"/><rect x="52" y="273" width="16" height="16" fill="#965840"/><rect x="68" y="272" width="18" height="18" fill="#4e4e4e"/><rect x="69" y="273" width="16" height="16" fill="#f5ecd8"/><rect x="0" y="289" width="18" height="18" fill="#4e4e4e"/><rect x="1" y="290" width="16" height="16" fill="#0e3878"/><rect x="17" y="289" width="18" height="18" fill="#4e4e4e"/><rect x="18" y="290" width="16" height="16" fill="#d6b068"/><rect x="34" y="289" width="18" height="18" fill="#4e4e4e"/><rect x="35" y="290" width="16" height="16" fill="#706e90"/><rect x="51" y="289" width="18" height="18" fill="#4e4e4e"/><rect x="52" y="290" width="16" height="16" fill="#b86a34"/><rect x="68" y="289" width="18" height="18" fill="#4e4e4e"/><rect x="69" y="290" width="16" height="16" fill="#f06036"/><rect x="0" y="306" width="18" height="18" fill="#4e4e4e"/><rect x="1" y="307" width="16" height="16" fill="#004c98"/><rect x="17" y="306" width="18" height="18" fill="#4e4e4e"/><rect x="18" y="307" width="16" height="16" fill="#aa8000"/><rect x="34" y="306" width="18" height="18" fill="#4e4e4e"/><rect x="35" y="307" width="16" height="16" fill="#4a566e"/><rect x="51" y="306" width="18" height="18" fill="#4e4e4e"/><rect x="52" y="307" width="16" height="16" fill="#986e6a"/><rect x="68" y="306" width="18" height="18" fill="#4e4e4e"/><rect x="69" y="307" width="16" height="16" fill="#b0b0b0"/><rect x="0" y="323" width="18" height="18" fill="#4e4e4e"/><rect x="1" y="324" width="16" height="16" fill="#0c78c8"/><rect x="17" y="323" width="18" height="18" fill="#4e4e4e"/><rect x="18" y="324" width="16" height="16" fill="#c0a048"/><rect x="34" y="323" width="18" height="18" fill="#4e4e4e"/><rect x="35" y="324" width="16" height="16" fill="#3a5a6e"/><rect x="51" y="323" width="18" height="18" fill="#4e4e4e"/><rect x="52" y="324" width="16" height="16" fill="#c06a6a"/><rect x="68" y="323" width="18" height="18" fill="#4e4e4e"/><rect x="69" y="324" width="16" height="16" fill="#6ac4cc"/><rect x="0" y="340" width="18" height="18" fill="#4e4e4e"/><rect x="1" y="341" width="16" height="16" fill="#68bcf4"/><rect x="17" y="340" width="18" height="18" fill="#4e4e4e"/><rect x="18" y="341" width="16" height="16" fill="#d6cc8e"/><rect x="34" y="340" width="18" height="18" fill="#4e4e4e"/><rect x="35" y="341" width="16" height="16" fill="#5a6a92"/><rect x="51" y="340" width="18" height="18" fill="#4e4e4e"/><rect x="52" y="341" width="16" height="16" fill="#c06a6a"/><rect x="68" y="340" width="18" height="18" fill="#4e4e4e"/><rect x="69" y="341" width="16" height="16" fill="#f59a9a"/><rect x="0" y="357" width="18" height="18" fill="#4e4e4e"/><rect x="1" y="358" width="16" height="16" fill="#0e98d8"/><rect x="17" y="357" width="18" height="18" fill="#4e4e4e"/><rect x="18" y="358" width="16" height="16" fill="#ae9470"/><rect x="34" y="357" width="18" height="18" fill="#4e4e4e"/><rect x="35" y="358" width="16" height="16" fill="#92aca8"/><rect x="51" y="357" width="18" height="18" fill="#4e4e4e"/><rect x="52" y="358" width="16" height="16" fill="#c48484"/><rect x="68" y="357" width="18" height="18" fill="#4e4e4e"/><rect x="69" y="358" width="16" height="16" fill="#f57058"/><rect x="0" y="374" width="18" height="18" fill="#4e4e4e"/><rect x="1" y="375" width="16" height="16" fill="#3a4a8c"/><rect x="17" y="374" width="18" height="18" fill="#4e4e4e"/><rect x="18" y="375" width="16" height="16" fill="#4a1230"/><rect x="34" y="374" width="18" height="18" fill="#4e4e4e"/><rect x="35" y="375" width="16" height="16" fill="#5a7272"/><rect x="51" y="374" width="18" height="18" fill="#4e4e4e"/><rect x="52" y="375" width="16" height="16" fill="#6a5458"/><rect x="68" y="374" width="18" height="18" fill="#4e4e4e"/><rect x="69" y="375" width="16" height="16" fill="#542e33"/><rect x="0" y="391" width="18" height="18" fill="#4e4e4e"/><rect x="1" y="392" width="16" height="16" fill="#68bcf4"/><rect x="17" y="391" width="18" height="18" fill="#4e4e4e"/><rect x="18" y="392" width="16" height="16" fill="#542e33"/><rect x="34" y="391" width="18" height="18" fill="#4e4e4e"/><rect x="35" y="392" width="16" height="16" fill="#565656"/><rect x="51" y="391" width="18" height="18" fill="#4e4e4e"/><rect x="52" y="392" width="16" height="16" fill="#565656"/><rect x="68" y="391" width="18" height="18" fill="#4e4e4e"/><rect x="69" y="392" width="16" height="16" fill="#0e9060"/><rect x="0" y="408" width="18" height="18" fill="#4e4e4e"/><rect x="1" y="409" width="16" height="16" fill="#5a8a40"/><rect x="17" y="408" width="18" height="18" fill="#4e4e4e"/><rect x="18" y="409" width="16" height="16" fill="#542e33"/><rect x="34" y="408" width="18" height="18" fill="#4e4e4e"/><rect x="35" y="409" width="16" height="16" fill="#4a566e"/><rect x="51" y="408" width="18" height="18" fill="#4e4e4e"/><rect x="52" y="409" width="16" height="16" fill="#6a3a72"/><rect x="68" y="408" width="18" height="18" fill="#4e4e4e"/><rect x="69" y="409" width="16" height="16" fill="#f5f5f5"/><rect x="0" y="425" width="18" height="18" fill="#4e4e4e"/><rect x="1" y="426" width="16" height="16" fill="#0e9060"/><rect x="17" y="425" width="18" height="18" fill="#4e4e4e"/><rect x="18" y="426" width="16" height="16" fill="#a03060"/><rect x="34" y="425" width="18" height="18" fill="#4e4e4e"/><rect x="35" y="426" width="16" height="16" fill="#5a7272"/><rect x="51" y="425" width="18" height="18" fill="#4e4e4e"/><rect x="52" y="426" width="16" height="16" fill="#8a4a70"/><rect x="68" y="425" width="18" height="18" fill="#4e4e4e"/><rect x="69" y="426" width="16" height="16" fill="#f59a9a"/></svg>
<svg class="ab" style="left:976px;top:184px" width="69" height="443" viewBox="0 0 69 443"><rect x="0" y="0" width="17" height="17" fill="#fafafa"/><path d="M6 16 L16 6 V16Z" fill="#bdbdbd"/><path d="M6 5 L11 8.5 L6 12Z" fill="#111"/><rect x="17" y="0" width="18" height="18" fill="#4e4e4e"/><rect x="18" y="1" width="16" height="16" fill="#f8c8aa"/><rect x="34" y="0" width="18" height="18" fill="#4e4e4e"/><rect x="35" y="1" width="16" height="16" fill="#087c58"/><rect x="51" y="0" width="18" height="18" fill="#4e4e4e"/><rect x="52" y="1" width="16" height="16" fill="#723432"/><rect x="0" y="17" width="17" height="17" fill="#fafafa"/><path d="M1 18 L16 33 M16 18 L1 33" stroke="#222" stroke-width="1"/><rect x="17" y="17" width="18" height="18" fill="#4e4e4e"/><rect x="18" y="18" width="16" height="16" fill="#a88e6c"/><rect x="34" y="17" width="18" height="18" fill="#4e4e4e"/><rect x="35" y="18" width="16" height="16" fill="#1b3433"/><rect x="51" y="17" width="18" height="18" fill="#4e4e4e"/><rect x="52" y="18" width="16" height="16" fill="#906e6a"/><rect x="0" y="34" width="18" height="18" fill="#4e4e4e"/><rect x="1" y="35" width="16" height="16" fill="#532f33"/><rect x="17" y="34" width="18" height="18" fill="#4e4e4e"/><rect x="18" y="35" width="16" height="16" fill="#f8c8aa"/><rect x="34" y="34" width="18" height="18" fill="#4e4e4e"/><rect x="35" y="35" width="16" height="16" fill="#1b9a9c"/><rect x="51" y="34" width="18" height="18" fill="#4e4e4e"/><rect x="52" y="35" width="16" height="16" fill="#d0b08a"/><rect x="0" y="51" width="18" height="18" fill="#4e4e4e"/><rect x="1" y="52" width="16" height="16" fill="#532f33"/><rect x="17" y="51" width="18" height="18" fill="#4e4e4e"/><rect x="18" y="52" width="16" height="16" fill="#f8c8aa"/><rect x="34" y="51" width="18" height="18" fill="#4e4e4e"/><rect x="35" y="52" width="16" height="16" fill="#1b3433"/><rect x="51" y="51" width="18" height="18" fill="#4e4e4e"/><rect x="52" y="52" width="16" height="16" fill="#d0b0a0"/><rect x="0" y="68" width="18" height="18" fill="#4e4e4e"/><rect x="1" y="69" width="16" height="16" fill="#532f33"/><rect x="17" y="68" width="18" height="18" fill="#4e4e4e"/><rect x="18" y="69" width="16" height="16" fill="#b89058"/><rect x="34" y="68" width="18" height="18" fill="#4e4e4e"/><rect x="35" y="69" width="16" height="16" fill="#1b9a9c"/><rect x="51" y="68" width="18" height="18" fill="#4e4e4e"/><rect x="52" y="69" width="16" height="16" fill="#f78a10"/><rect x="0" y="85" width="18" height="18" fill="#4e4e4e"/><rect x="1" y="86" width="16" height="16" fill="#703030"/><rect x="17" y="85" width="18" height="18" fill="#4e4e4e"/><rect x="18" y="86" width="16" height="16" fill="#f8c8aa"/><rect x="34" y="85" width="18" height="18" fill="#4e4e4e"/><rect x="35" y="86" width="16" height="16" fill="#50a8e8"/><rect x="51" y="85" width="18" height="18" fill="#4e4e4e"/><rect x="52" y="86" width="16" height="16" fill="#f8c8aa"/><rect x="0" y="102" width="18" height="18" fill="#4e4e4e"/><rect x="1" y="103" width="16" height="16" fill="#703030"/><rect x="17" y="102" width="18" height="18" fill="#4e4e4e"/><rect x="18" y="103" width="16" height="16" fill="#707070"/><rect x="34" y="102" width="18" height="18" fill="#4e4e4e"/><rect x="35" y="103" width="16" height="16" fill="#608898"/><rect x="51" y="102" width="18" height="18" fill="#4e4e4e"/><rect x="52" y="103" width="16" height="16" fill="#d0b08a"/><rect x="0" y="119" width="18" height="18" fill="#4e4e4e"/><rect x="1" y="120" width="16" height="16" fill="#532f33"/><rect x="17" y="119" width="18" height="18" fill="#4e4e4e"/><rect x="18" y="120" width="16" height="16" fill="#f2a030"/><rect x="34" y="119" width="18" height="18" fill="#4e4e4e"/><rect x="35" y="120" width="16" height="16" fill="#555555"/><rect x="51" y="119" width="18" height="18" fill="#4e4e4e"/><rect x="52" y="120" width="16" height="16" fill="#70c4cc"/><rect x="0" y="136" width="18" height="18" fill="#4e4e4e"/><rect x="1" y="137" width="16" height="16" fill="#b05028"/><rect x="17" y="136" width="18" height="18" fill="#4e4e4e"/><rect x="18" y="137" width="16" height="16" fill="#a88e6c"/><rect x="34" y="136" width="18" height="18" fill="#4e4e4e"/><rect x="35" y="137" width="16" height="16" fill="#0f314f"/><rect x="51" y="136" width="18" height="18" fill="#4e4e4e"/><rect x="52" y="137" width="16" height="16" fill="#0e9060"/><rect x="0" y="153" width="18" height="18" fill="#4e4e4e"/><rect x="1" y="154" width="16" height="16" fill="#262218"/><rect x="17" y="153" width="18" height="18" fill="#4e4e4e"/><rect x="18" y="154" width="16" height="16" fill="#f8c8aa"/><rect x="34" y="153" width="18" height="18" fill="#4e4e4e"/><rect x="35" y="154" width="16" height="16" fill="#0a3878"/><rect x="0" y="170" width="18" height="18" fill="#4e4e4e"/><rect x="1" y="171" width="16" height="16" fill="#b05028"/><rect x="17" y="170" width="18" height="18" fill="#4e4e4e"/><rect x="18" y="171" width="16" height="16" fill="#f5f5f5"/><rect x="34" y="170" width="18" height="18" fill="#4e4e4e"/><rect x="35" y="171" width="16" height="16" fill="#555555"/><rect x="0" y="187" width="18" height="18" fill="#4e4e4e"/><rect x="1" y="188" width="16" height="16" fill="#8a5030"/><rect x="17" y="187" width="18" height="18" fill="#4e4e4e"/><rect x="18" y="188" width="16" height="16" fill="#d6ccb4"/><rect x="34" y="187" width="18" height="18" fill="#4e4e4e"/><rect x="35" y="188" width="16" height="16" fill="#6e6a90"/><rect x="0" y="204" width="18" height="18" fill="#4e4e4e"/><rect x="1" y="205" width="16" height="16" fill="#553e38"/><rect x="17" y="204" width="18" height="18" fill="#4e4e4e"/><rect x="18" y="205" width="16" height="16" fill="#f8d08a"/><rect x="34" y="204" width="18" height="18" fill="#4e4e4e"/><rect x="35" y="205" width="16" height="16" fill="#6e1e70"/><rect x="0" y="221" width="18" height="18" fill="#4e4e4e"/><rect x="1" y="222" width="16" height="16" fill="#fcd8c8"/><rect x="17" y="221" width="18" height="18" fill="#4e4e4e"/><rect x="18" y="222" width="16" height="16" fill="#f0c478"/><rect x="34" y="221" width="18" height="18" fill="#4e4e4e"/><rect x="35" y="222" width="16" height="16" fill="#a05290"/><rect x="0" y="238" width="18" height="18" fill="#4e4e4e"/><rect x="1" y="239" width="16" height="16" fill="#f57010"/><rect x="17" y="238" width="18" height="18" fill="#4e4e4e"/><rect x="18" y="239" width="16" height="16" fill="#f2ac50"/><rect x="34" y="238" width="18" height="18" fill="#4e4e4e"/><rect x="35" y="239" width="16" height="16" fill="#c07aa8"/><rect x="0" y="255" width="18" height="18" fill="#4e4e4e"/><rect x="1" y="256" width="16" height="16" fill="#d86e10"/><rect x="17" y="255" width="18" height="18" fill="#4e4e4e"/><rect x="18" y="256" width="16" height="16" fill="#d6ccb4"/><rect x="34" y="255" width="18" height="18" fill="#4e4e4e"/><rect x="35" y="256" width="16" height="16" fill="#a03060"/><rect x="0" y="272" width="18" height="18" fill="#4e4e4e"/><rect x="1" y="273" width="16" height="16" fill="#706a6a"/><rect x="17" y="272" width="18" height="18" fill="#4e4e4e"/><rect x="18" y="273" width="16" height="16" fill="#d6cc8e"/><rect x="34" y="272" width="18" height="18" fill="#4e4e4e"/><rect x="35" y="273" width="16" height="16" fill="#555555"/><rect x="0" y="289" width="18" height="18" fill="#4e4e4e"/><rect x="1" y="290" width="16" height="16" fill="#987058"/><rect x="17" y="289" width="18" height="18" fill="#4e4e4e"/><rect x="18" y="290" width="16" height="16" fill="#f6d090"/><rect x="34" y="289" width="18" height="18" fill="#4e4e4e"/><rect x="35" y="290" width="16" height="16" fill="#a03060"/><rect x="0" y="306" width="18" height="18" fill="#4e4e4e"/><rect x="1" y="307" width="16" height="16" fill="#f57010"/><rect x="17" y="306" width="18" height="18" fill="#4e4e4e"/><rect x="18" y="307" width="16" height="16" fill="#bcb070"/><rect x="34" y="306" width="18" height="18" fill="#4e4e4e"/><rect x="35" y="307" width="16" height="16" fill="#ea3470"/><rect x="0" y="323" width="18" height="18" fill="#4e4e4e"/><rect x="1" y="324" width="16" height="16" fill="#987058"/><rect x="17" y="323" width="18" height="18" fill="#4e4e4e"/><rect x="18" y="324" width="16" height="16" fill="#d6cc8e"/><rect x="34" y="323" width="18" height="18" fill="#4e4e4e"/><rect x="35" y="324" width="16" height="16" fill="#38383a"/><rect x="0" y="340" width="18" height="18" fill="#4e4e4e"/><rect x="1" y="341" width="16" height="16" fill="#6a5458"/><rect x="17" y="340" width="18" height="18" fill="#4e4e4e"/><rect x="18" y="341" width="16" height="16" fill="#6e6454"/><rect x="34" y="340" width="18" height="18" fill="#4e4e4e"/><rect x="35" y="341" width="16" height="16" fill="#ea3c3c"/><rect x="0" y="357" width="18" height="18" fill="#4e4e4e"/><rect x="1" y="358" width="16" height="16" fill="#6a4a2a"/><rect x="17" y="357" width="18" height="18" fill="#4e4e4e"/><rect x="18" y="358" width="16" height="16" fill="#f8d800"/><rect x="34" y="357" width="18" height="18" fill="#4e4e4e"/><rect x="35" y="358" width="16" height="16" fill="#72302c"/><rect x="0" y="374" width="18" height="18" fill="#4e4e4e"/><rect x="1" y="375" width="16" height="16" fill="#f39a70"/><rect x="17" y="374" width="18" height="18" fill="#4e4e4e"/><rect x="18" y="375" width="16" height="16" fill="#f8d800"/><rect x="34" y="374" width="18" height="18" fill="#4e4e4e"/><rect x="35" y="375" width="16" height="16" fill="#9a2a5c"/><rect x="0" y="391" width="18" height="18" fill="#4e4e4e"/><rect x="1" y="392" width="16" height="16" fill="#c48858"/><rect x="17" y="391" width="18" height="18" fill="#4e4e4e"/><rect x="18" y="392" width="16" height="16" fill="#d8e8b0"/><rect x="34" y="391" width="18" height="18" fill="#4e4e4e"/><rect x="35" y="392" width="16" height="16" fill="#8a3028"/><rect x="0" y="408" width="18" height="18" fill="#4e4e4e"/><rect x="1" y="409" width="16" height="16" fill="#d6ccb4"/><rect x="17" y="408" width="18" height="18" fill="#4e4e4e"/><rect x="18" y="409" width="16" height="16" fill="#70c030"/><rect x="34" y="408" width="18" height="18" fill="#4e4e4e"/><rect x="35" y="409" width="16" height="16" fill="#d04a2a"/><rect x="0" y="425" width="18" height="18" fill="#4e4e4e"/><rect x="1" y="426" width="16" height="16" fill="#f6d090"/><rect x="17" y="425" width="18" height="18" fill="#4e4e4e"/><rect x="18" y="426" width="16" height="16" fill="#24504a"/><rect x="34" y="425" width="18" height="18" fill="#4e4e4e"/><rect x="35" y="426" width="16" height="16" fill="#72302c"/></svg>
<svg class="ab" style="left:888px;top:184px" width="18" height="35" viewBox="0 0 18 35"><rect x="2" y="19" width="14" height="14" fill="none" stroke="#111" stroke-width="2"/></svg>
<svg class="ab" style="left:976px;top:184px" width="18" height="18" viewBox="0 0 18 18"><rect x="2" y="2" width="14" height="14" fill="none" stroke="#111" stroke-width="2"/></svg>
<div class="ab" style="left:939px;top:576px;width:1px;height:16px;background:#565656"></div>
<svg class="ab" style="left:957px;top:586px" width="6" height="6" viewBox="0 0 6 6"><rect x="0.5" y="0.5" width="5" height="5" fill="#888" stroke="#ddd"/><rect x="2" y="2" width="2" height="2" fill="#222"/></svg>
<div class="ab" style="left:899px;top:626px;width:1px;height:15px;background:#cfcfcf"></div>
<div class="ab" style="left:932px;top:626px;width:1px;height:15px;background:#cfcfcf"></div>
<div class="ab" style="left:975px;top:626px;width:1px;height:15px;background:#cfcfcf"></div>
<div class="ab" style="left:988px;top:626px;width:1px;height:15px;background:#cfcfcf"></div>
<div class="ab" style="left:1016px;top:626px;width:1px;height:15px;background:#cfcfcf"></div>
<div class="ab" style="left:1045px;top:626px;width:1px;height:15px;background:#cfcfcf"></div>
<div class="ab" style="left:974px;top:184px;width:2px;height:442px;background:#fdfdfd"></div>
<div class="t" style="left:878px;top:650px;font-size:11.5px;color:#111;letter-spacing:-0.15px">0 M: 30 Y: 30 K: 0</div>
<div class="ab" style="left:3px;top:688px;width:1px;height:34px;background:#dcdcdc"></div>
<div class="ab" style="left:9px;top:688px;width:1px;height:34px;background:#dcdcdc"></div>
<svg class="ab" style="left:6px;top:690px" width="2" height="34" viewBox="0 0 2 34"><rect x="0" y="0.0" width="1.5" height="1.5" fill="#a8a8a8"/><rect x="0" y="3.2" width="1.5" height="1.5" fill="#a8a8a8"/><rect x="0" y="6.4" width="1.5" height="1.5" fill="#a8a8a8"/><rect x="0" y="9.6" width="1.5" height="1.5" fill="#a8a8a8"/><rect x="0" y="12.8" width="1.5" height="1.5" fill="#a8a8a8"/><rect x="0" y="16.0" width="1.5" height="1.5" fill="#a8a8a8"/><rect x="0" y="19.2" width="1.5" height="1.5" fill="#a8a8a8"/><rect x="0" y="22.4" width="1.5" height="1.5" fill="#a8a8a8"/><rect x="0" y="25.6" width="1.5" height="1.5" fill="#a8a8a8"/><rect x="0" y="28.8" width="1.5" height="1.5" fill="#a8a8a8"/></svg>
<div class="ab" style="left:0px;top:686px;width:1053px;height:1px;background:#d8d8d8"></div>
<svg class="ab" style="left:11px;top:688px" width="596" height="34" viewBox="0 0 596 34"><rect x="0" y="0" width="18" height="18" fill="#fafafa"/><rect x="2" y="2" width="13" height="13" fill="#e8e8e8" stroke="#111" stroke-width="1.6"/><path d="M7 13 L13 7 V13Z" fill="#c0c0c0"/><path d="M6 6 L10 8.5 L6 11Z" fill="#111"/><rect x="17" y="0" width="18" height="18" fill="#fafafa"/><path d="M18 1 L34 17 M34 1 L18 17" stroke="#222"/><rect x="34" y="0" width="18" height="18" fill="#4e4e4e"/><rect x="35" y="1" width="16" height="16" fill="#4a5070"/><rect x="51" y="0" width="18" height="18" fill="#4e4e4e"/><rect x="52" y="1" width="16" height="16" fill="#2a706a"/><rect x="68" y="0" width="18" height="18" fill="#4e4e4e"/><rect x="69" y="1" width="16" height="16" fill="#5a7272"/><rect x="85" y="0" width="18" height="18" fill="#4e4e4e"/><rect x="86" y="1" width="16" height="16" fill="#1a9aa0"/><rect x="102" y="0" width="18" height="18" fill="#4e4e4e"/><rect x="103" y="1" width="16" height="16" fill="#0e9060"/><rect x="119" y="0" width="18" height="18" fill="#4e4e4e"/><rect x="120" y="1" width="16" height="16" fill="#2a7050"/><rect x="136" y="0" width="18" height="18" fill="#4e4e4e"/><rect x="137" y="1" width="16" height="16" fill="#0e9060"/><rect x="153" y="0" width="18" height="18" fill="#4e4e4e"/><rect x="154" y="1" width="16" height="16" fill="#1a9aa0"/><rect x="170" y="0" width="18" height="18" fill="#4e4e4e"/><rect x="171" y="1" width="16" height="16" fill="#0e98d8"/><rect x="187" y="0" width="18" height="18" fill="#4e4e4e"/><rect x="188" y="1" width="16" height="16" fill="#68bcf4"/><rect x="204" y="0" width="18" height="18" fill="#4e4e4e"/><rect x="205" y="1" width="16" height="16" fill="#ea3470"/><rect x="221" y="0" width="18" height="18" fill="#4e4e4e"/><rect x="222" y="1" width="16" height="16" fill="#a04a70"/><rect x="238" y="0" width="18" height="18" fill="#4e4e4e"/><rect x="239" y="1" width="16" height="16" fill="#f78a10"/><rect x="255" y="0" width="18" height="18" fill="#4e4e4e"/><rect x="256" y="1" width="16" height="16" fill="#f59a9a"/><rect x="272" y="0" width="18" height="18" fill="#4e4e4e"/><rect x="273" y="1" width="16" height="16" fill="#92aca8"/><rect x="289" y="0" width="18" height="18" fill="#4e4e4e"/><rect x="290" y="1" width="16" height="16" fill="#708870"/><rect x="306" y="0" width="18" height="18" fill="#4e4e4e"/><rect x="307" y="1" width="16" height="16" fill="#708870"/><rect x="323" y="0" width="18" height="18" fill="#4e4e4e"/><rect x="324" y="1" width="16" height="16" fill="#8aaa80"/><rect x="340" y="0" width="18" height="18" fill="#4e4e4e"/><rect x="341" y="1" width="16" height="16" fill="#6a4a70"/><rect x="357" y="0" width="18" height="18" fill="#4e4e4e"/><rect x="358" y="1" width="16" height="16" fill="#b8b0d6"/><rect x="374" y="0" width="18" height="18" fill="#4e4e4e"/><rect x="375" y="1" width="16" height="16" fill="#9286b4"/><rect x="391" y="0" width="18" height="18" fill="#4e4e4e"/><rect x="392" y="1" width="16" height="16" fill="#706e6e"/><rect x="408" y="0" width="18" height="18" fill="#4e4e4e"/><rect x="409" y="1" width="16" height="16" fill="#5a6a92"/><rect x="425" y="0" width="18" height="18" fill="#4e4e4e"/><rect x="426" y="1" width="16" height="16" fill="#704a8e"/><rect x="442" y="0" width="18" height="18" fill="#4e4e4e"/><rect x="443" y="1" width="16" height="16" fill="#555555"/><rect x="459" y="0" width="18" height="18" fill="#4e4e4e"/><rect x="460" y="1" width="16" height="16" fill="#706e6e"/><rect x="476" y="0" width="18" height="18" fill="#4e4e4e"/><rect x="477" y="1" width="16" height="16" fill="#908c70"/><rect x="493" y="0" width="18" height="18" fill="#4e4e4e"/><rect x="494" y="1" width="16" height="16" fill="#908c70"/><rect x="510" y="0" width="18" height="18" fill="#4e4e4e"/><rect x="511" y="1" width="16" height="16" fill="#8aaa68"/><rect x="527" y="0" width="18" height="18" fill="#4e4e4e"/><rect x="528" y="1" width="16" height="16" fill="#c0c070"/><rect x="544" y="0" width="18" height="18" fill="#4e4e4e"/><rect x="545" y="1" width="16" height="16" fill="#908c70"/><rect x="561" y="0" width="18" height="18" fill="#4e4e4e"/><rect x="562" y="1" width="16" height="16" fill="#706e90"/><rect x="578" y="0" width="18" height="18" fill="#4e4e4e"/><rect x="579" y="1" width="16" height="16" fill="#4a566e"/><rect x="0" y="17" width="18" height="18" fill="#4e4e4e"/><rect x="1" y="18" width="16" height="16" fill="#c06a6a"/><rect x="17" y="17" width="18" height="18" fill="#4e4e4e"/><rect x="18" y="18" width="16" height="16" fill="#c08ab8"/><rect x="34" y="17" width="18" height="18" fill="#4e4e4e"/><rect x="35" y="18" width="16" height="16" fill="#6a5458"/><rect x="51" y="17" width="18" height="18" fill="#4e4e4e"/><rect x="52" y="18" width="16" height="16" fill="#727070"/><rect x="68" y="17" width="18" height="18" fill="#4e4e4e"/><rect x="69" y="18" width="16" height="16" fill="#98708f"/><rect x="85" y="17" width="18" height="18" fill="#4e4e4e"/><rect x="86" y="18" width="16" height="16" fill="#c06a6a"/><rect x="102" y="17" width="18" height="18" fill="#4e4e4e"/><rect x="103" y="18" width="16" height="16" fill="#a03060"/><rect x="119" y="17" width="18" height="18" fill="#4e4e4e"/><rect x="120" y="18" width="16" height="16" fill="#ea3c3c"/><rect x="136" y="17" width="18" height="18" fill="#4e4e4e"/><rect x="137" y="18" width="16" height="16" fill="#f35b6a"/><rect x="153" y="17" width="18" height="18" fill="#4e4e4e"/><rect x="154" y="18" width="16" height="16" fill="#f57070"/><rect x="170" y="17" width="18" height="18" fill="#4e4e4e"/><rect x="171" y="18" width="16" height="16" fill="#c48484"/><rect x="187" y="17" width="18" height="18" fill="#4e4e4e"/><rect x="188" y="18" width="16" height="16" fill="#8a4a70"/><rect x="204" y="17" width="18" height="18" fill="#4e4e4e"/><rect x="205" y="18" width="16" height="16" fill="#704a8e"/><rect x="221" y="17" width="18" height="18" fill="#4e4e4e"/><rect x="222" y="18" width="16" height="16" fill="#6a3a72"/><rect x="238" y="17" width="18" height="18" fill="#4e4e4e"/><rect x="239" y="18" width="16" height="16" fill="#6a2010"/><rect x="255" y="17" width="18" height="18" fill="#4e4e4e"/><rect x="256" y="18" width="16" height="16" fill="#8a3214"/><rect x="272" y="17" width="18" height="18" fill="#4e4e4e"/><rect x="273" y="18" width="16" height="16" fill="#b03a0a"/><rect x="289" y="17" width="18" height="18" fill="#4e4e4e"/><rect x="290" y="18" width="16" height="16" fill="#b83a0a"/><rect x="306" y="17" width="18" height="18" fill="#4e4e4e"/><rect x="307" y="18" width="16" height="16" fill="#d82a20"/><rect x="323" y="17" width="18" height="18" fill="#4e4e4e"/><rect x="324" y="18" width="16" height="16" fill="#e83a0a"/><rect x="340" y="17" width="18" height="18" fill="#4e4e4e"/><rect x="341" y="18" width="16" height="16" fill="#f06036"/><rect x="357" y="17" width="18" height="18" fill="#4e4e4e"/><rect x="358" y="18" width="16" height="16" fill="#f57058"/><rect x="374" y="17" width="18" height="18" fill="#4e4e4e"/><rect x="375" y="18" width="16" height="16" fill="#f59a9a"/><rect x="391" y="17" width="18" height="18" fill="#4e4e4e"/><rect x="392" y="18" width="16" height="16" fill="#fcd8c8"/><rect x="408" y="17" width="18" height="18" fill="#4e4e4e"/><rect x="409" y="18" width="16" height="16" fill="#8a3028"/><rect x="425" y="17" width="18" height="18" fill="#4e4e4e"/><rect x="426" y="18" width="16" height="16" fill="#a83a28"/><rect x="442" y="17" width="18" height="18" fill="#4e4e4e"/><rect x="443" y="18" width="16" height="16" fill="#b04a28"/><rect x="459" y="17" width="18" height="18" fill="#4e4e4e"/><rect x="460" y="18" width="16" height="16" fill="#d04a2a"/><rect x="476" y="17" width="18" height="18" fill="#4e4e4e"/><rect x="477" y="18" width="16" height="16" fill="#f57058"/><rect x="493" y="17" width="18" height="18" fill="#4e4e4e"/><rect x="494" y="18" width="16" height="16" fill="#f39a70"/><rect x="510" y="17" width="18" height="18" fill="#4e4e4e"/><rect x="511" y="18" width="16" height="16" fill="#f8c8aa"/><rect x="527" y="17" width="18" height="18" fill="#4e4e4e"/><rect x="528" y="18" width="16" height="16" fill="#8a5018"/><rect x="544" y="17" width="18" height="18" fill="#4e4e4e"/><rect x="545" y="18" width="16" height="16" fill="#b06010"/><rect x="561" y="17" width="18" height="18" fill="#4e4e4e"/><rect x="562" y="18" width="16" height="16" fill="#b06a10"/><rect x="578" y="17" width="18" height="18" fill="#4e4e4e"/><rect x="579" y="18" width="16" height="16" fill="#d87010"/></svg>
<svg class="ab" style="left:878px;top:688px" width="154" height="34" viewBox="0 0 154 34"><rect x="0" y="0" width="18" height="18" fill="#4e4e4e"/><rect x="1" y="1" width="16" height="16" fill="#905848"/><rect x="17" y="0" width="18" height="18" fill="#4e4e4e"/><rect x="18" y="1" width="16" height="16" fill="#c07050"/><rect x="34" y="0" width="18" height="18" fill="#4e4e4e"/><rect x="35" y="1" width="16" height="16" fill="#9e6088"/><rect x="51" y="0" width="18" height="18" fill="#4e4e4e"/><rect x="52" y="1" width="16" height="16" fill="#c06094"/><rect x="68" y="0" width="18" height="18" fill="#4e4e4e"/><rect x="69" y="1" width="16" height="16" fill="#c06094"/><rect x="85" y="0" width="18" height="18" fill="#4e4e4e"/><rect x="86" y="1" width="16" height="16" fill="#98708f"/><rect x="102" y="0" width="18" height="18" fill="#4e4e4e"/><rect x="103" y="1" width="16" height="16" fill="#f57058"/><rect x="119" y="0" width="18" height="18" fill="#4e4e4e"/><rect x="120" y="1" width="16" height="16" fill="#f39a70"/><rect x="136" y="0" width="18" height="18" fill="#4e4e4e"/><rect x="137" y="1" width="16" height="16" fill="#986e6a"/><rect x="0" y="17" width="18" height="18" fill="#4e4e4e"/><rect x="1" y="18" width="16" height="16" fill="#fefd6a"/><rect x="17" y="17" width="18" height="18" fill="#4e4e4e"/><rect x="18" y="18" width="16" height="16" fill="#fdf99a"/><rect x="34" y="17" width="18" height="18" fill="#4e4e4e"/><rect x="35" y="18" width="16" height="16" fill="#f5ecd8"/><rect x="51" y="17" width="18" height="18" fill="#4e4e4e"/><rect x="52" y="18" width="16" height="16" fill="#0e9060"/><rect x="68" y="17" width="18" height="18" fill="#4e4e4e"/><rect x="69" y="18" width="16" height="16" fill="#3db54a"/><rect x="85" y="17" width="18" height="18" fill="#4e4e4e"/><rect x="86" y="18" width="16" height="16" fill="#70c030"/><rect x="102" y="17" width="18" height="18" fill="#4e4e4e"/><rect x="103" y="18" width="16" height="16" fill="#68c048"/><rect x="119" y="17" width="18" height="18" fill="#4e4e4e"/><rect x="120" y="18" width="16" height="16" fill="#8acb40"/><rect x="136" y="17" width="18" height="18" fill="#4e4e4e"/><rect x="137" y="18" width="16" height="16" fill="#a8d880"/></svg>
<div class="ab" style="left:1032px;top:688px;width:21px;height:34px;background:#f6f6f6"></div>
<svg class="ab" style="left:1036px;top:676px" width="9" height="8" viewBox="0 0 9 8"><rect x="6" y="0" width="1.2" height="1.2" fill="#999"/><rect x="3" y="3" width="1.2" height="1.2" fill="#999"/><rect x="6" y="3" width="1.2" height="1.2" fill="#999"/><rect x="0" y="6" width="1.2" height="1.2" fill="#999"/><rect x="3" y="6" width="1.2" height="1.2" fill="#999"/><rect x="6" y="6" width="1.2" height="1.2" fill="#999"/></svg>
<div class="ab" style="left:1045px;top:686px;width:1px;height:36px;background:#d0d0d0"></div>
<div class="ab" style="left:606px;top:75px;width:276px;height:647px;background:#f6f6f6;border-left:1px solid #151515;border-top:1px solid #151515;border-right:1px solid #111;border-radius:4px 4px 0 0"></div>
<div class="ab" style="left:607px;top:100px;width:1px;height:622px;background:#fff"></div>
<div class="ab" style="left:608px;top:100px;width:1px;height:622px;background:#d4d4d4"></div>
<div class="ab" style="left:879px;top:100px;width:1px;height:622px;background:#aaa"></div>
<div class="ab" style="left:880px;top:100px;width:1px;height:622px;background:#555"></div>
<div class="ab" style="left:607px;top:76px;width:274px;height:24px;background:linear-gradient(#a9a9a9 0,#a9a9a9 9px,#cdcdcd 9px,#cdcdcd 24px)"></div>
<div class="t" style="left:613px;top:83px;font-size:12px;color:#1a1a3a;letter-spacing:-0.18px">张伟CDR字体设计辅助www.zw1976.com</div>
<div class="ab" style="left:846px;top:80px;width:31px;height:17px;background:linear-gradient(#f0f0f0 0,#f0f0f0 1px,#b4b4b4 2px,#acacac 7px,#6e6e6e 7px,#6e6e6e 10px,#9a9a9a 10px,#a0a0a0 14px,#dcdcdc 15px);border:1.5px solid #2a2a2a;border-radius:3px"></div>
<svg class="ab" style="left:855px;top:83px" width="13" height="10" viewBox="0 0 13 10"><path d="M2 1.5 L11 8.5 M11 1.5 L2 8.5" stroke="#2a3a6a" stroke-width="3.6" stroke-linecap="round"/><path d="M2 1.5 L11 8.5 M11 1.5 L2 8.5" stroke="#fff" stroke-width="2" stroke-linecap="round"/></svg>
<div class="ab" style="left:649px;top:115px;width:176px;height:80px;background:#d9251c"></div>
<div class="t" style="left:661px;top:129px;font-size:34px;color:#fff;-webkit-text-stroke:0.7px #fff">易键易图</div>
<svg class="ab" style="left:663px;top:170px" width="16" height="16" viewBox="0 0 16 16"><circle cx="8" cy="8" r="7" fill="none" stroke="#fff" stroke-width="1.5"/><ellipse cx="6.5" cy="7" rx="3.5" ry="2.8" fill="none" stroke="#fff" stroke-width="1.2"/><ellipse cx="10" cy="9.5" rx="3" ry="2.4" fill="none" stroke="#fff" stroke-width="1.2"/></svg>
<div class="t" style="left:684px;top:169px;font-size:18px;color:#fff;transform:scaleX(0.8);transform-origin:0 0;-webkit-text-stroke:0.3px #fff">ZW15038635670</div>
<div class="t" style="left:657px;top:202px;font-size:16px;color:#111;">张伟CDR字体设计辅助</div>
<div class="t" style="left:639px;top:240px;font-size:12px;color:#111;">修饰笔划</div>
<div class="ab" style="left:699px;top:240px;width:1px;height:13px;background:#777"></div>
<div class="t" style="left:706px;top:240px;font-size:12px;color:#111;">字体设计常用</div>
<div class="t" style="left:791px;top:238px;font-size:12px;color:#111;">一键效果</div>
<div class="ab" style="left:846px;top:237px;width:1px;height:18px;background:#777"></div>
<div class="ab" style="left:856px;top:254px;width:2px;height:453px;background:linear-gradient(90deg,#777 50%,#fff 50%)"></div>
<div class="ab" style="left:635px;top:289px;width:215px;height:2px;background:linear-gradient(#777 50%,#fff 50%)"></div>
<div class="ab" style="left:715px;top:264px;width:2px;height:25px;background:linear-gradient(90deg,#777 50%,#fff 50%)"></div>
<div class="ab" style="left:786px;top:264px;width:2px;height:25px;background:linear-gradient(90deg,#777 50%,#fff 50%)"></div>
<div class="ab" style="left:849px;top:264px;width:2px;height:25px;background:linear-gradient(90deg,#777 50%,#fff 50%)"></div>
<div class="ab" style="left:625px;top:706px;width:233px;height:2px;background:linear-gradient(#777 50%,#fff 50%)"></div>
<div class="t" style="left:672px;top:717px;font-size:12px;color:#111;">张伟高端平面设计实战培训</div>
<svg class="ab" style="left:667px;top:88px" width="12" height="20" viewBox="0 0 12 20"><path d="M1 1 V16 L4.5 12.5 L7 18 L9.5 17 L7 11.5 H11.5 Z" fill="#fff" stroke="#1a1a3a" stroke-width="1.1"/></svg>
</body></html>
